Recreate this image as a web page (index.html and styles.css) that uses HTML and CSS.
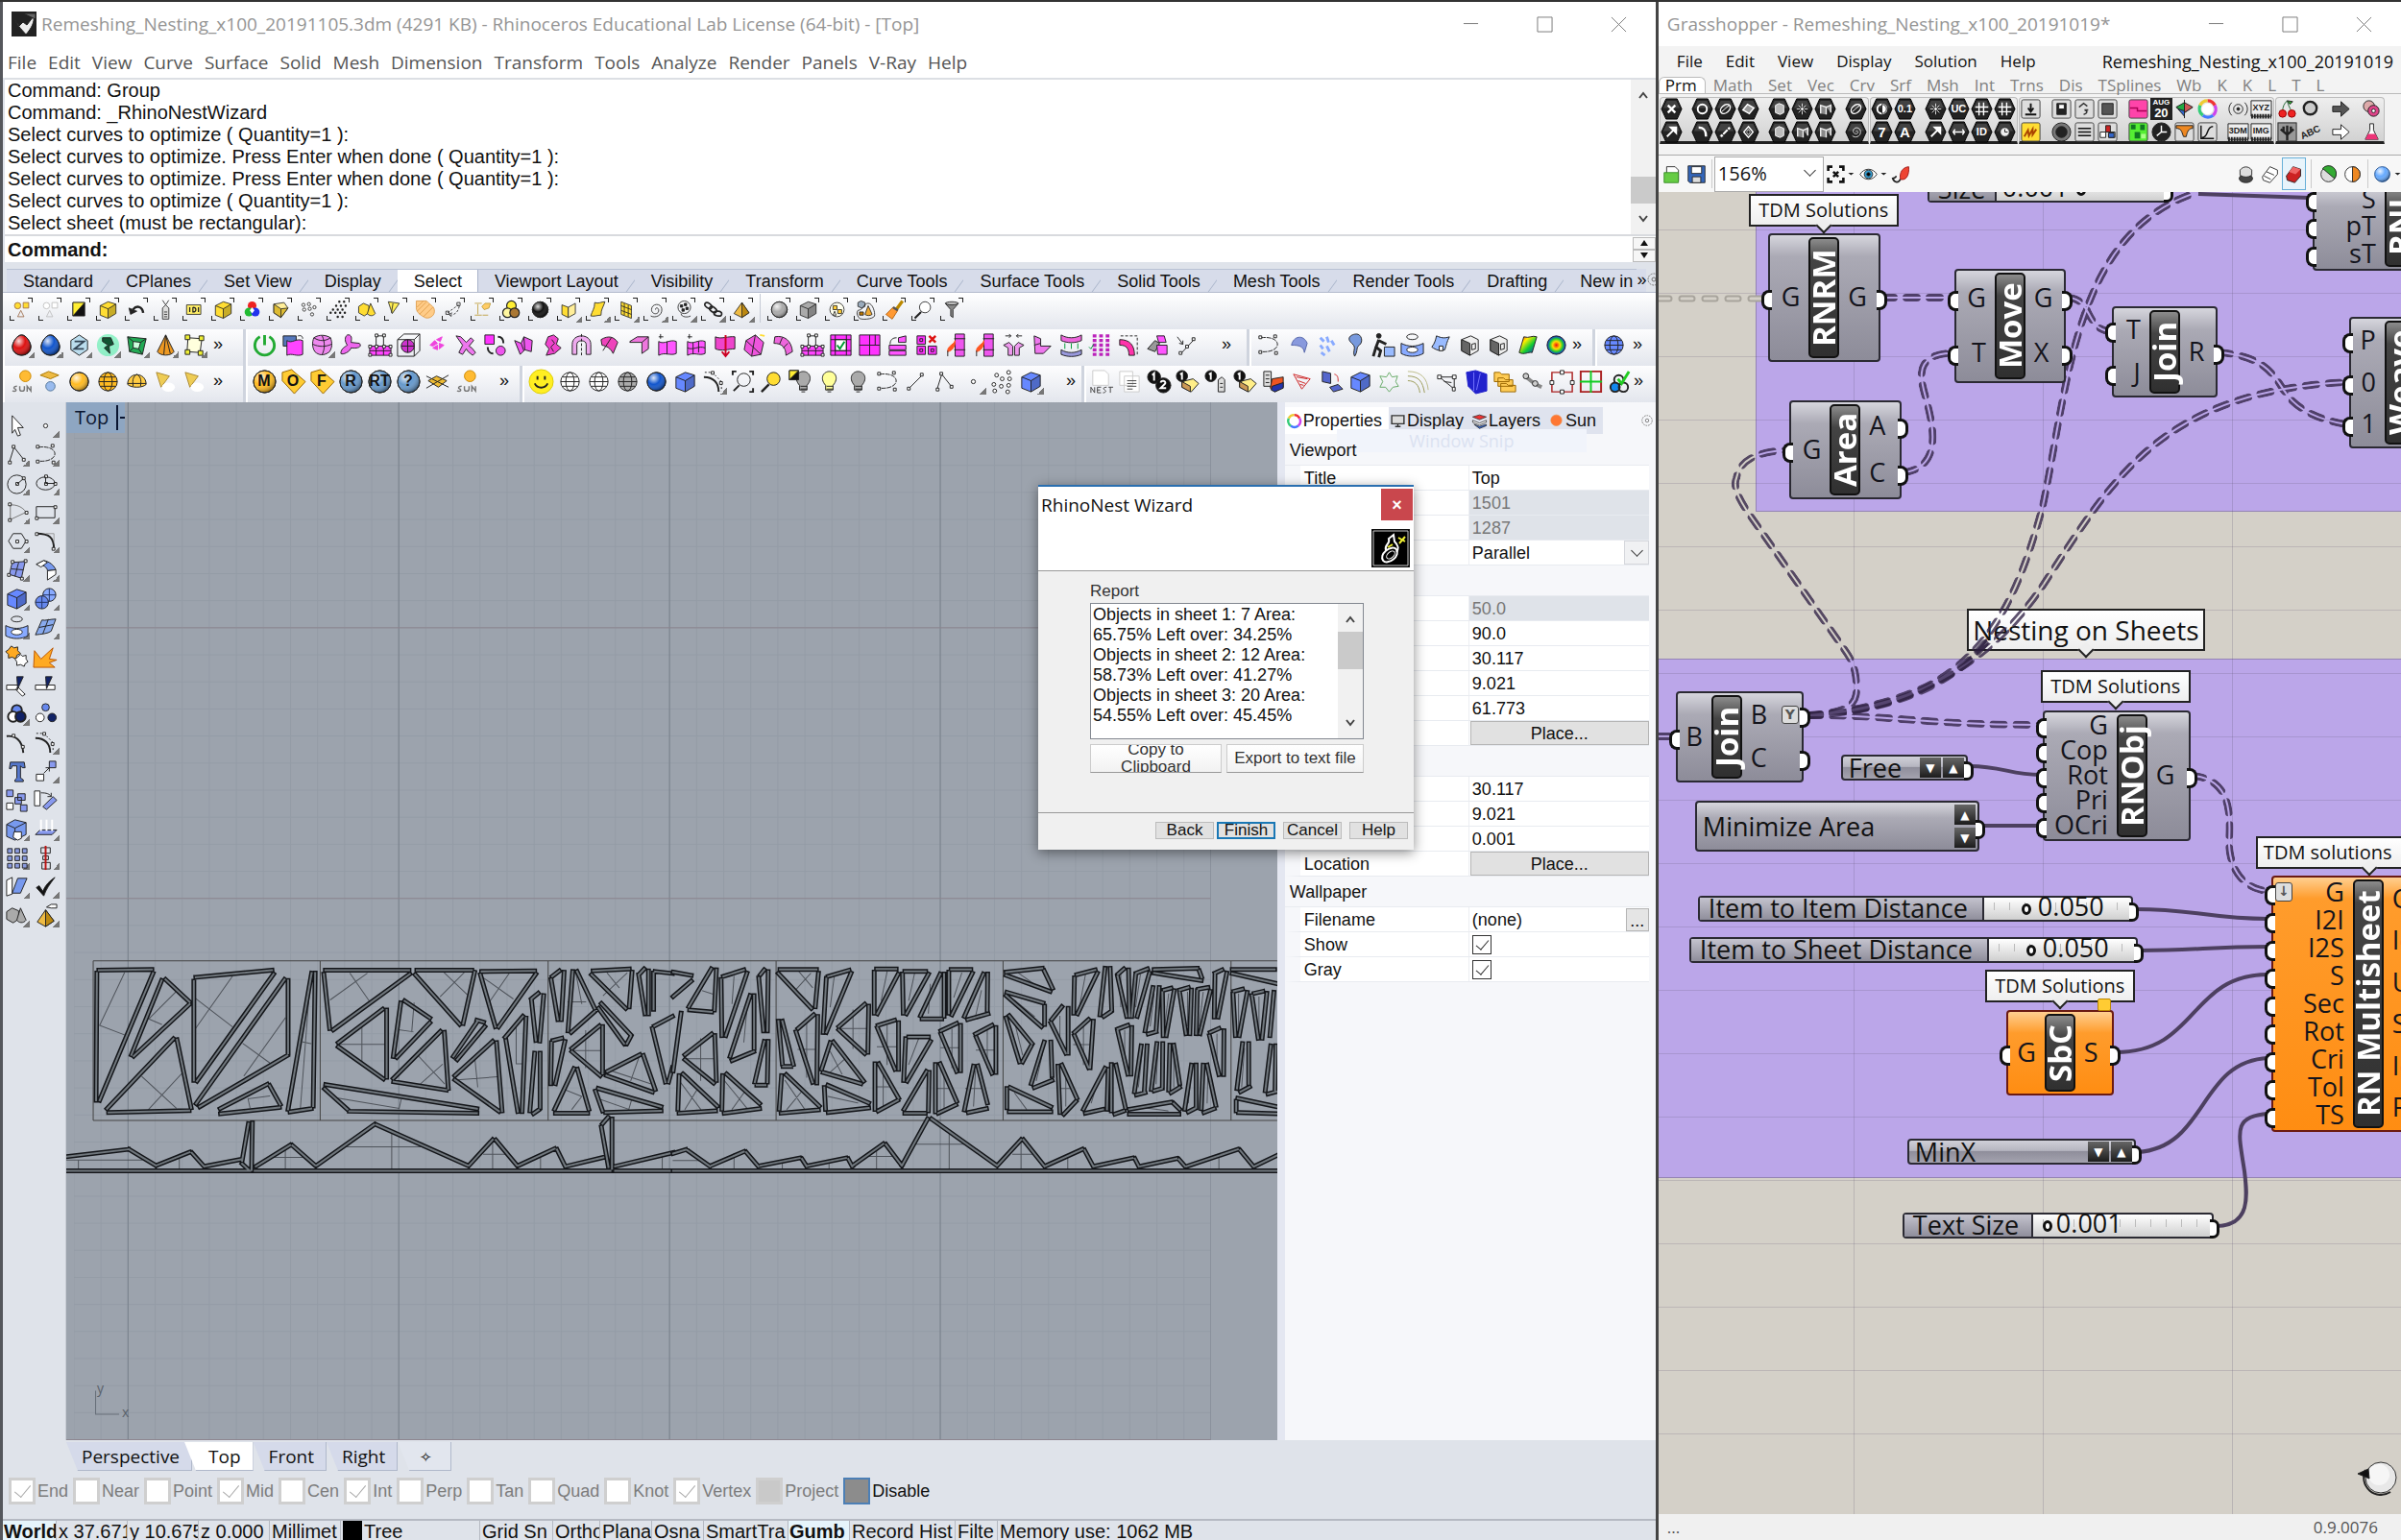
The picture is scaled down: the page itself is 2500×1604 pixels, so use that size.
FILE: index.html
```html
<!DOCTYPE html>
<html lang="en">
<head>
<meta charset="utf-8">
<title>Remeshing_Nesting_x100 - Rhinoceros and Grasshopper</title>
<link rel="stylesheet" href="styles.css">
</head>
<body>
<svg class="defs" aria-hidden="true">
<defs>
<linearGradient id="rain" x1="0" x2="1" y1="0" y2="1"><stop offset="0" stop-color="#e11"/><stop offset=".3" stop-color="#fe0"/><stop offset=".6" stop-color="#1c3"/><stop offset="1" stop-color="#12e"/></linearGradient>
<radialGradient id="shine" cx=".35" cy=".3" r=".7"><stop offset="0" stop-color="#fff" stop-opacity=".85"/><stop offset=".5" stop-color="#fff" stop-opacity="0"/><stop offset="1" stop-color="#000" stop-opacity=".4"/></radialGradient>
<radialGradient id="heat"><stop offset="0" stop-color="#e11"/><stop offset=".4" stop-color="#fd0"/><stop offset=".7" stop-color="#2c3"/><stop offset="1" stop-color="#12e"/></radialGradient>
</defs>
<symbol id="cube" viewBox="0 0 28 28"><path d="M4 9 14 4 24 7V19L14 25 4 21z" fill="currentColor"/><path d="M14 13 24 7V19L14 25z" fill="#000" fill-opacity=".22" stroke="none"/><path d="M4 9l10 4 10-6M14 13v12"/></symbol>
<symbol id="ball" viewBox="0 0 28 28"><circle cx="14" cy="14" r="10" fill="currentColor"/><circle cx="14" cy="14" r="10" fill="url(#shine)"/></symbol>
<symbol id="egg" viewBox="0 0 28 28"><path d="M14 3C19 3 24 11 24 16A10 9 0 0 1 4 16C4 11 9 3 14 3z" fill="currentColor"/><path d="M14 3C19 3 24 11 24 16A10 9 0 0 1 4 16C4 11 9 3 14 3z" fill="url(#shine)"/></symbol>
<symbol id="shapes" viewBox="0 0 28 28"><circle cx="9" cy="9" r="4" fill="currentColor"/><path d="M16 5h7v7h-7z" fill="currentColor"/><path d="M13 15l-4 8h8z"/></symbol>
<symbol id="invert" viewBox="0 0 28 28"><path d="M6 5h15v17H6z" fill="#111"/><path d="M6 22V5H21z" fill="#fe3"/></symbol>
<symbol id="undo" viewBox="0 0 28 28"><path d="M22 18C21 10 14 8 9 14" stroke-width="3"/><path d="M4 12l2 8 8-4z" fill="#222"/></symbol>
<symbol id="tag" viewBox="0 0 28 28"><path d="M10 12l4-4 4 4v14h-8z" fill="#ddd"/><path d="M12 17h4M12 20h4M12 23h4M14 8L10 2M14 8l4-6"/></symbol>
<symbol id="idc" viewBox="0 0 28 28"><path d="M4 8h18v12H4z" fill="#fe6"/><path d="M8 11v6M12 11v6c5 0 5-6 0-6M19 11v6" stroke-width="1.5"/></symbol>
<symbol id="rgb" viewBox="0 0 28 28"><g stroke="none"><circle cx="14" cy="9" r="5.500" fill="#e22"/><circle cx="10" cy="17" r="5.500" fill="#2b3"/><circle cx="18" cy="17" r="5.500" fill="#23e"/><path d="M14 11l3 4-3 4-3-4z" fill="#fff"/></g></symbol>
<symbol id="slab" viewBox="0 0 28 28"><path d="M5 7l13-2 5 7-9 12-9-6z" fill="#fe9"/><path d="M5 7l9 6 9-1-9 12-9-6z" fill="#db3"/><path d="M14 13v11"/></symbol>
<symbol id="pts" viewBox="0 0 28 28"><g fill="#fff"><circle cx="6" cy="8" r="2"/><circle cx="13" cy="7" r="2"/><circle cx="7" cy="14" r="2"/><circle cx="14" cy="13" r="2"/><circle cx="20" cy="11" r="2"/><circle cx="17" cy="20" r="2"/></g></symbol>
<symbol id="dots" viewBox="0 0 28 28"><path d="M15 4v0M21 4v0M11 9v0M17 9v0M23 9v0M7 14v0M13 14v0M19 14v0M4 18v0M10 18v0M16 18v0M22 18v0M13 23v0M19 23v0" stroke-width="3" stroke-linecap="round"/></symbol>
<symbol id="solids" viewBox="0 0 28 28"><path d="M3 10l6-4 7 3v9l-6 4-7-4z" fill="currentColor"/><path d="M18 6l6 13c-3 4-8 3-10 0z" fill="currentColor"/></symbol>
<symbol id="fan" viewBox="0 0 28 28"><path d="M4 4l14 2-9 13z" fill="#fe5"/><path d="M10 6l-2 12"/></symbol>
<symbol id="hatch" viewBox="0 0 28 28"><path d="M3 3h13c5 6 10 6 10 13s-8 10-12 8S3 18 3 12z" fill="#fc8" stroke="#d94"/><path d="M4 11l8-8M4 16L16 4M7 20L20 7M12 23L24 11" stroke="#d94"/></symbol>
<symbol id="span" viewBox="0 0 28 28"><path d="M6 18L20 8M9 21c6 0 11-4 12-12" stroke-dasharray="3 2"/><path d="M4 16h4v4H4zM18 5h4v4h-4zM8 20l4-2M8 20l3 3"/></symbol>
<symbol id="dims" viewBox="0 0 28 28"><path d="M4 6h9M4 21h9M8 7v13" stroke="#b93"/><path d="M13 10l4-4h7l-2 6-6 2z" fill="#fc6" stroke="#b93"/><path d="M14 21h7" stroke="#b93"/></symbol>
<symbol id="tri3" viewBox="0 0 28 28"><g stroke-width="1.500"><circle cx="14" cy="9" r="6" fill="#fe3"/><circle cx="9" cy="18" r="6" fill="#fff7a0"/><circle cx="18" cy="18" r="6" fill="currentColor"/></g></symbol>
<symbol id="open" viewBox="0 0 28 28"><path d="M5 8l8 3v13l-8-4z" fill="#fd3"/><path d="M13 11l9-5v13l-9 5z" fill="#fe9"/></symbol>
<symbol id="srf" viewBox="0 0 28 28"><path d="M10 5c5 2 8-1 13-1-2 7-5 9-5 17-5 0-8 2-13 1 2-7 5-9 5-17z" fill="currentColor"/></symbol>
<symbol id="mesh" viewBox="0 0 28 28"><path d="M7 4l13 5v16L7 20z" fill="currentColor"/><path d="M11 6v15M16 8v15M7 9l13 5M7 15l13 5"/></symbol>
<symbol id="spiral" viewBox="0 0 28 28"><path d="M14 14c0-4 5-2 4 2-1 5-9 4-9-2 0-8 12-9 13-1 1 9-9 12-14 9"/></symbol>
<symbol id="spots" viewBox="0 0 28 28"><circle cx="14" cy="11" r="8"/><path d="M9 8h3v3H9zM14 6h3v3h-3zM16 11h3v3h-3zM11 13h3v3h-3z" fill="#222"/><path d="M10 19c0 5 9 5 12 3"/></symbol>
<symbol id="chain" viewBox="0 0 28 28"><g stroke-width="2"><ellipse cx="8" cy="9" rx="5" ry="3" transform="rotate(35 8 9)"/><ellipse cx="14" cy="14" rx="5" ry="3" transform="rotate(35 14 14)"/><ellipse cx="20" cy="19" rx="5" ry="3" transform="rotate(10 20 19)"/></g></symbol>
<symbol id="pyr" viewBox="0 0 28 28"><path d="M14 5L4 19l10 5 9-6z" fill="#eb4"/><path d="M14 5v19l9-6z" fill="#b81"/></symbol>
<symbol id="ring" viewBox="0 0 28 28"><circle cx="14" cy="14" r="9" fill="#ffe"/><path d="M9 9h5v5H9zM15 14h5v5h-5z" fill="#fc3"/><path d="M11 16l-2 5h4z"/></symbol>
<symbol id="grp" viewBox="0 0 28 28"><path d="M8 3l5 2v5l-4 2-5-2V5z" fill="#9ab"/><path d="M4 15c8-1 7-9 13-9s9 12 8 16-18 6-20 2c-2-3-3-6-1-9z"/><path d="M17 9l5 11c-2 2-7 2-9 0z" fill="#ea3"/><path d="M6 17h5v4H6z" fill="#b70"/></symbol>
<symbol id="brush" viewBox="0 0 28 28"><path d="M24 3l-8 11" stroke="#b80" stroke-width="4"/><path d="M12 11l6 4-7 11-8-6z" fill="#f93" stroke="#a50"/><path d="M12 11l6 4" stroke="#555" stroke-width="3"/></symbol>
<symbol id="zoomi" viewBox="0 0 28 28"><circle cx="16" cy="11" r="7" fill="currentColor"/><path d="M11 17l-8 8" stroke-width="2.500"/></symbol>
<symbol id="funnel" viewBox="0 0 28 28"><path d="M5 6h17l-7 8v10l-3-2v-8z" fill="#888"/><ellipse cx="13.500" cy="6" rx="8" ry="2" fill="#bbb"/></symbol>
<symbol id="hexz" viewBox="0 0 28 28"><path d="M14 3l9 6v10l-9 6-9-6V9z" fill="#bde"/><path d="M9 10h10L9 18h10" stroke="#345" stroke-width="2"/></symbol>
<symbol id="glow" viewBox="0 0 28 28"><circle cx="14" cy="14" r="12" fill="#3e9" fill-opacity=".5" stroke="none"/><path d="M8 6h9l3 7-5 2 1 8-6-6 4-3-6-4z" fill="#153"/></symbol>
<symbol id="gbox" viewBox="0 0 28 28"><path d="M4 5l20 2-4 17-14-3z" fill="#2a5"/><path d="M10 10l8 1-2 7-6-1z" fill="#cfd"/><path d="M4 5l6 5M24 7l-6 4M20 24l-4-6M6 21l4-4"/></symbol>
<symbol id="cone" viewBox="0 0 28 28"><path d="M14 3l9 18c-3 5-15 5-18 0z" fill="#e92"/><path d="M14 3l-2 21M14 3l5 20"/></symbol>
<symbol id="cage" viewBox="0 0 28 28"><path d="M7 6l15 1-2 15-14-1z" fill="#ffd"/><g fill="#ee3"><path d="M4 3h5v5H4zM19 4h5v5h-5zM18 20h5v5h-5zM4 19h5v5H4z"/></g></symbol>
<symbol id="power" viewBox="0 0 28 28"><path d="M9 5a10.500 10.500 0 1 0 10 0M14 3v11" stroke="#2a3" stroke-width="3"/></symbol>
<symbol id="m1" viewBox="0 0 28 28"><path d="M3 4h14v11H3z" fill="#57b"/><path d="M7 9c5 4 10-3 17 0v15c-6 3-12-2-17 1z" fill="#f4f"/><path d="M19 4c4-1 5 1 5 3"/></symbol>
<symbol id="m2" viewBox="0 0 28 28"><path d="M5 6c6-4 13-3 18 0 2 6 2 10-1 15-6 5-12 4-16 0-3-5-3-10-1-15z" fill="#e8e"/><path d="M14 4c3 7 3 14 0 20M4 13c6 3 14 3 20 0M5 6c6 4 12 4 18 0"/></symbol>
<symbol id="m3" viewBox="0 0 28 28"><path d="M10 3c5-1 5 4 4 8l9 1c3 3 0 6-9 5-1 4-9 8-11 6 0-5 4-7 7-9-3-4-3-9 0-11z" fill="#e6e"/></symbol>
<symbol id="m4" viewBox="0 0 28 28"><path d="M3 15h23v10H3z" fill="#f4f"/><path d="M10 15V4h8v11M10 15v10M18 15v10M3 20h23"/><path d="M2 14h3v3H2zM9 14h3v3H9zM17 14h3v3h-3zM24 14h3v3h-3zM2 23h3v3H2zM24 23h3v3h-3zM9 2h3v3H9zM17 2h3v3h-3z" fill="#fff"/></symbol>
<symbol id="m5" viewBox="0 0 28 28"><path d="M2 8h18v18H2zM2 8l7-6h17v18l-6 6M20 8l6-6"/><circle cx="13" cy="15" r="7" fill="#c3c"/><path d="M13 8v14M6 15h14"/></symbol>
<symbol id="m6" viewBox="0 0 28 28"><path d="M6 14l5-5 3 3-5 3zM13 8l6-3-2 5zM9 17l5-3v5zM16 12l5 2-5 4z" fill="#e4d" stroke="#e4d"/></symbol>
<symbol id="m7" viewBox="0 0 28 28"><path d="M3 4l5 1 6 6 5-5 3 3-5 6 3 2 4 5-3 3-5-4-2-3-4 6-4-2 4-8z" fill="#e7e"/></symbol>
<symbol id="m8" viewBox="0 0 28 28"><path d="M3 3h10v10H3z" fill="#f3f"/><circle cx="20" cy="20" r="5" fill="#e5e"/><path d="M17 5c5 0 6 3 6 7M6 16c0 5 3 7 6 7" stroke-width="2"/></symbol>
<symbol id="m9" viewBox="0 0 28 28"><path d="M4 9l7 3 3-7 9 4-1 12-7-2-5 5z" fill="#e5e"/><path d="M14 5l1 14M11 12l3 8"/></symbol>
<symbol id="m10" viewBox="0 0 28 28"><path d="M9 5l6-2 5 4-2 6 5 4-7 6-9 2 3-7-4-5z" fill="#e4c"/><path d="M13 8l3 4-4 4 3 5"/></symbol>
<symbol id="m11" viewBox="0 0 28 28"><path d="M4 24V13C4 1 24 1 24 13v11h-5V13c0-5-10-5-10 0v11z" fill="#eae"/><path d="M14 2v24" stroke-dasharray="3 2"/></symbol>
<symbol id="m12" viewBox="0 0 28 28"><path d="M4 8c8-5 14-3 18 3l-5 12c-3-6-7-8-12-9z" fill="#e4b"/><path d="M6 20l9-14"/></symbol>
<symbol id="m13" viewBox="0 0 28 28"><path d="M4 10l8-5h12v13l-7 5V11H4z" fill="#e7d"/><path d="M17 11l7-6"/></symbol>
<symbol id="m14" viewBox="0 0 28 28"><path d="M4 10c6 4 12-3 19 0v13c-6 3-12-2-19 2z" fill="#f5f"/><path d="M13 10v14M6 2v5M4 5h5"/></symbol>
<symbol id="m15" viewBox="0 0 28 28"><path d="M4 10c6 4 12-3 19 0v13c-6 3-12-2-19 2z" fill="#f5f"/><path d="M10 11v13M16 10v12M4 17c6 3 12-3 19 0M6 2v5M4 5h5"/></symbol>
<symbol id="m16" viewBox="0 0 28 28"><path d="M3 5c6 3 14-1 21 0v13c-7 0-14 3-21 0z" fill="#e4c"/><path d="M14 3v23M10 21l4 5 4-5" stroke="#c02" stroke-width="2"/></symbol>
<symbol id="m17" viewBox="0 0 28 28"><path d="M5 9l10-6 9 8-3 13-10 2-8-7z" fill="#e5d"/><path d="M15 3L11 26M5 9l16 15" /><path d="M20 3l5 1" stroke="#fd3" stroke-width="2"/></symbol>
<symbol id="m18" viewBox="0 0 28 28"><path d="M5 5c10-2 18 4 19 16l-7 4C17 16 12 12 4 12z" fill="#e6d"/><path d="M13 6l-3 7M19 12l-5 5"/></symbol>
<symbol id="m19" viewBox="0 0 28 28"><path d="M3 3h22v22H3z" fill="#f3f"/><path d="M8 8h12v12H8z" fill="#fff"/><path d="M8 3v22M20 3v22M3 8h22M3 20h22"/><path d="M10 14l3 4 5-8" stroke="#093" stroke-width="2"/></symbol>
<symbol id="m20" viewBox="0 0 28 28"><path d="M3 3h22v22H3z" fill="#f3f"/><path d="M14 3v22M3 14h22M20 3v11" /></symbol>
<symbol id="m21" viewBox="0 0 28 28"><path d="M4 14h18v5H4zM4 20h18v5H4zM14 6l8-2v7h-8z" fill="#f5f"/><path d="M5 13c0-5 3-7 7-7"/></symbol>
<symbol id="m22" viewBox="0 0 28 28"><path d="M3 4h9v9H3zM3 15h9v9H3zM15 15h9v9h-9z" fill="#f3f"/><path d="M6 7h3v3H6zM6 18h3v3H6zM18 18h3v3h-3z"/><path d="M16 4l7 7M23 4l-7 7" stroke="#d11" stroke-width="2.500"/></symbol>
<symbol id="m23" viewBox="0 0 28 28"><path d="M13 2h10v24H13z" fill="#e5e"/><path d="M12 7h12M12 19h12"/><path d="M13 9c-2 5-9 6-8 12 5-1 8-5 8-12z" fill="#f52" stroke="#f52"/><path d="M5 20v6"/></symbol>
<symbol id="m24" viewBox="0 0 28 28"><path d="M3 14l6-3 4 4v10H8V17zM25 14l-6-3-4 4v10h5V17z" fill="#e9e"/><path d="M5 4h6M9 2l2 2-2 2M23 4h-6M19 2l-2 2 2 2"/></symbol>
<symbol id="m25" viewBox="0 0 28 28"><path d="M5 4l7 3v8h11l-8 8H6z" fill="#e7e"/><path d="M5 14l7-2"/></symbol>
<symbol id="m26" viewBox="0 0 28 28"><path d="M3 3c7 4 15 4 22 0v6c-7 3-15 3-22 0z" fill="#e6d"/><path d="M3 19c7 4 15 4 22 0v5c-7 3-15 3-22 0z" fill="#99d"/><path d="M7 12v6M14 12v6M21 12v6" stroke="#093"/></symbol>
<symbol id="m27" viewBox="0 0 28 28"><path d="M6 4h18M6 9h18M6 14h18M6 19h18M6 24h18" stroke="#b2b" stroke-width="3.500" stroke-dasharray="4 3"/><path d="M2 16l2 2 3-5" stroke="#093"/></symbol>
<symbol id="m28" viewBox="0 0 28 28"><path d="M4 8c11 0 16 6 16 17h-6c0-8-3-11-10-11z" fill="#f3a"/><path d="M5 4h18v20" stroke-dasharray="3 2"/></symbol>
<symbol id="m29" viewBox="0 0 28 28"><path d="M3 18l8-9 5 3-5 9z" fill="#999"/><path d="M13 4h8l2 7h-8zM13 14h11v10H14z" fill="#f5f"/></symbol>
<symbol id="m30" viewBox="0 0 28 28"><path d="M4 5l6 8M10 13l-4-1M10 13V9M8 23L22 8"/><path d="M6 21h3v3H6zM13 14h3v3h-3zM20 6h3v3h-3z" fill="#fff"/></symbol>
<symbol id="arc" viewBox="0 0 28 28"><path d="M6 6c24-3 24 17 0 15" stroke-dasharray="5 1"/><path d="M4 4h3v3H4zM4 20h3v3H4zM20 3h3v3h-3zM21 21h3v3h-3z" fill="#fff"/></symbol>
<symbol id="b2" viewBox="0 0 28 28"><path d="M8 14c2-10 13-12 17-2l-3 10c-1-7-6-8-14-8z" fill="#89d" stroke="#56a"/></symbol>
<symbol id="b3" viewBox="0 0 28 28"><path d="M8 6l4 4M15 5l2 6M8 14l3 4M15 15l3 6M20 9l3 5M9 22l4 3" stroke="#8af" stroke-width="3"/></symbol>
<symbol id="b4" viewBox="0 0 28 28"><path d="M14 26c-3-6 3-9-3-14-7-6 0-10 5-10s8 8 3 12c-4 3-1 6-5 12z" fill="#79d"/></symbol>
<symbol id="b5" viewBox="0 0 28 28"><circle cx="9" cy="4" r="2.500" fill="#222"/><path d="M9 8l-3 8 5 4-2 7M6 16l-3 10M9 9l8 4" stroke-width="3"/><path d="M15 16h11v10H15z" fill="#9bf"/></symbol>
<symbol id="b6" viewBox="0 0 28 28"><ellipse cx="14" cy="5" rx="6" ry="3"/><path d="M2 12c8 4 16 4 24 0v11c-7 4-17 4-24 0z" fill="#8af"/><ellipse cx="14" cy="19" rx="6" ry="3" fill="#fff"/></symbol>
<symbol id="b7" viewBox="0 0 28 28"><path d="M9 4c5 2 8 3 14 1-3 6-3 8-5 14-5 2-10 0-14-3 3-4 4-7 5-12z" fill="#9bf"/><path d="M12 15h4v5h-4z" fill="#fff"/></symbol>
<symbol id="lcube" viewBox="0 0 28 28"><path d="M5 8l10-4 8 4v12l-9 5-9-5z" fill="#eee"/><path d="M5 8l9 4v13l-9-5z" fill="#666"/><path d="M16 13l4-1v6l-4 1z"/></symbol>
<symbol id="rainb" viewBox="0 0 28 28"><path d="M10 5c6 2 9-2 14 0l-5 17c-5-1-8 3-14 0z" fill="url(#rain)"/></symbol>
<symbol id="heatb" viewBox="0 0 28 28"><circle cx="14" cy="14" r="10" fill="url(#heat)"/></symbol>
<symbol id="globe" viewBox="0 0 28 28"><circle cx="14" cy="14" r="10" fill="currentColor"/><ellipse cx="14" cy="14" rx="4.500" ry="10"/><path d="M4 14h20M6 9h16M6 19h16"/></symbol>
<symbol id="sun" viewBox="0 0 28 28"><circle cx="18" cy="8" r="6" fill="#fb3" stroke="#c80"/><path d="M9 19c-4 0-4 2-2 3s1 3-3 2M12 19v3c0 3 5 3 5 0v-3M20 25v-6l4 5v-5" stroke="#777" stroke-width="1.500"/></symbol>
<symbol id="plane" viewBox="0 0 28 28"><path d="M3 7l9-4 11 4-9 4z" fill="#eb4" stroke="#a70"/><circle cx="14" cy="19" r="5" fill="#9be" stroke="#579"/></symbol>
<symbol id="dome" viewBox="0 0 28 28"><path d="M4 17C4 3 24 3 24 17c-4 4-16 4-20 0z" fill="#fc4"/><path d="M10 19c-1-8 0-10 4-13 4 3 5 5 4 13M4 16h20"/></symbol>
<symbol id="spot" viewBox="0 0 28 28"><path d="M4 4l14 4-9 12z" fill="#ec5" stroke="#a83"/><ellipse cx="17" cy="20" rx="7" ry="5" fill="#fff" stroke="none"/></symbol>
<symbol id="vm" viewBox="0 0 28 28"><circle cx="14" cy="14" r="12" fill="currentColor"/><circle cx="14" cy="14" r="12" fill="url(#shine)"/></symbol>
<symbol id="vt" viewBox="0 0 28 28"><path d="M2 4l10-3 15 13-12 13L2 13z" fill="#fc3" stroke="#960"/></symbol>
<symbol id="vmesh" viewBox="0 0 28 28"><path d="M4 13l9-5 11 5-9 7z" fill="#eb3"/><path d="M2 8l24 12M2 21L26 7"/></symbol>
<symbol id="smile" viewBox="0 0 28 28"><circle cx="14" cy="14" r="13" fill="#fe2" stroke="#dc0"/><path d="M10 8v4M18 8v4M7 16c3 6 11 6 14 0" stroke-width="2"/></symbol>
<symbol id="crv" viewBox="0 0 28 28"><path d="M3 9c10 0 16 6 16 16" stroke-width="2"/><path d="M4 4h8l10 10v10" stroke-dasharray="2 2"/><path d="M11 3h3v3h-3zM20 14h3v3h-3z" fill="#fff"/></symbol>
<symbol id="ext" viewBox="0 0 28 28"><circle cx="15" cy="12" r="7"/><path d="M10 18l-6 6" stroke-width="2"/><path d="M3 7V3h4M21 3h4v4M25 21v4h-4" stroke-width="2"/></symbol>
<symbol id="bulb" viewBox="0 0 28 28"><path d="M10 18C3 10 8 3 14 3s11 7 4 15v5h-8z" fill="currentColor"/><path d="M11 19h7M11 22h7M12 25h4"/></symbol>
<symbol id="bulbx" viewBox="0 0 28 28"><use href="#bulb" x="3"/><path d="M2 2h10v10H2z" fill="#111"/><path d="M2 12V2h10z" fill="#fe3"/></symbol>
<symbol id="line" viewBox="0 0 28 28"><path d="M7 21L21 7"/><path d="M5 20h3v3H5zM19 5h3v3h-3z" fill="#fff"/></symbol>
<symbol id="pline" viewBox="0 0 28 28"><path d="M6 22l5-16 11 14"/><path d="M5 21h3v3H5zM9 4h3v3H9zM20 18h3v3h-3z" fill="#fff"/></symbol>
<symbol id="pt" viewBox="0 0 28 28"><circle cx="14" cy="14" r="2.200" fill="#fff"/></symbol>
<symbol id="cloud" viewBox="0 0 28 28"><g fill="#fff"><circle cx="8" cy="7" r="2"/><circle cx="21" cy="4" r="2"/><circle cx="14" cy="11" r="2"/><circle cx="22" cy="11" r="2"/><circle cx="5" cy="17" r="2"/><circle cx="13" cy="19" r="2"/><circle cx="21" cy="18" r="2"/><circle cx="6" cy="24" r="2"/><circle cx="20" cy="25" r="2"/></g></symbol>
<symbol id="nest" viewBox="0 0 28 28"><path d="M5 2h13l4 4v12H5z" fill="#fff" stroke="#ccc"/><path d="M3 26v-6l4 6v-6M14 20h-4v6h4M10 23h3M20 20c-4 0-4 2-2 3s1 3-2 3M22 20h5M24 20v6" stroke="#444"/></symbol>
<symbol id="docs" viewBox="0 0 28 28"><path d="M3 3h14v15H3zM8 8h16v17H8z" fill="#fff" stroke="#ccc"/><path d="M11 13h10M11 16h10M11 19h10M11 22h6" stroke="#444"/></symbol>
<symbol id="n12" viewBox="0 0 28 28"><circle cx="9" cy="9" r="7" fill="#111"/><circle cx="19" cy="18" r="8" fill="#111"/><path d="M7 7l2-2v8M16 15c1-3 6-2 5 1l-5 5h6" stroke="#fff" stroke-width="2"/></symbol>
<symbol id="n1s" viewBox="0 0 28 28"><path d="M8 14l12-3 6 5-8 9-10-5z" fill="#fe8"/><path d="M8 14l9 5v6l-9-5z" fill="#c95"/><circle cx="8" cy="8" r="6" fill="#111"/><path d="M6 6l2-1v7" stroke="#fff" stroke-width="2"/></symbol>
<symbol id="n1t" viewBox="0 0 28 28"><path d="M16 12l4-3 3 3v13h-7z" fill="#ddd"/><circle cx="8" cy="8" r="6" fill="#111"/><path d="M6 6l2-1v7" stroke="#fff" stroke-width="2"/><path d="M18 16h3M18 20h3"/></symbol>
<symbol id="rb" viewBox="0 0 28 28"><path d="M3 3h8v16H3z" fill="#ddd"/><path d="M5 7h4M5 11h4M5 15h4"/><path d="M12 11l12-2v11l-9 5-5-4z" fill="#e52"/><path d="M12 19l12-4v6l-9 4-4-2z" fill="#23a"/></symbol>
<symbol id="rv" viewBox="0 0 28 28"><path d="M4 6l18 5-9 11zM7 9l12 2M9 13l8 3M11 17l4 1" stroke="#c22"/></symbol>
<symbol id="bs" viewBox="0 0 28 28"><path d="M4 3l9 2v11l-9-2zM12 20l9-3 5 5-10 3z" fill="#56c"/><path d="M17 6c4 1 4 4 4 8" stroke="#c22"/></symbol>
<symbol id="star" viewBox="0 0 28 28"><path d="M14 4l3 5 6-1-2 6 3 5-6 1-4 5-4-5-6 0 3-6-3-6 7 1z" stroke="#6a6"/></symbol>
<symbol id="arcs" viewBox="0 0 28 28"><path d="M3 8c12 0 16 6 18 18M3 13c8 0 12 5 13 13" stroke="#995"/><path d="M3 3c15 0 21 8 22 20" stroke="#bb8"/></symbol>
<symbol id="tr" viewBox="0 0 28 28"><path d="M6 9h16v13zM11 14l8 1"/><path d="M4 7h4v4H4zM20 7h4v4h-4zM20 20h3v4h-3z" fill="#fff"/></symbol>
<symbol id="bl" viewBox="0 0 28 28"><path d="M4 4l10-2 12 4v18l-12 3-8-8z" fill="#22c" stroke="#22c"/><path d="M12 4v20M19 5l-4 18" stroke="#77f"/></symbol>
<symbol id="fold" viewBox="0 0 28 28"><path d="M3 4h6l2 2h8v8H3zM7 10h6l2 2h8v7H7zM10 16h6l2 2h8v7H10z" fill="#fc5" stroke="#960"/></symbol>
<symbol id="arm" viewBox="0 0 28 28"><path d="M5 8l10 8 8 4" stroke="#888" stroke-width="4"/><circle cx="6" cy="8" r="3" fill="#ccc"/><circle cx="16" cy="16" r="3" fill="#ccc"/></symbol>
<symbol id="rsq" viewBox="0 0 28 28"><path d="M3 4h22v21H3z" stroke="#a22" stroke-width="1.500"/><path d="M12 2h4v4h-4zM12 23h4v4h-4zM1 13h4v4H1zM23 13h4v4h-4z" fill="#fff"/></symbol>
<symbol id="gsq" viewBox="0 0 28 28"><path d="M3 3h22v22H3z" stroke="#a22" stroke-width="2"/><path d="M14 2v24M2 14h24" stroke="#1c2" stroke-width="2"/></symbol>
<symbol id="ckc" viewBox="0 0 28 28"><circle cx="13" cy="12" r="5" stroke-width="2"/><circle cx="9" cy="20" r="5" fill="#18e" stroke-width="2"/><circle cx="18" cy="20" r="5" stroke-width="2"/><path d="M12 11l4 5 8-13" stroke="#2c2" stroke-width="3"/></symbol>
<symbol id="arrow" viewBox="0 0 28 28"><path d="M9 3l12 13h-6l3 8-3 1-3-7-3 4z" fill="#fff"/></symbol>
<symbol id="circ" viewBox="0 0 28 28"><circle cx="14" cy="15" r="10"/><path d="M14 15l7-6M13 13h3v3h-3zM20 7h3v3h-3z" fill="#fff"/></symbol>
<symbol id="elli" viewBox="0 0 28 28"><ellipse cx="14" cy="14" rx="10" ry="7"/><path d="M14 14h10M14 14V7M13 13h3v3h-3zM13 5h3v3h-3zM23 13h3v3h-3z" fill="#fff"/></symbol>
<symbol id="pie" viewBox="0 0 28 28"><path d="M7 6v16L24 14C20 8 14 6 7 6" stroke="#777"/><path d="M5 4h3v3H5zM5 21h3v3H5zM23 13h3v3h-3z" fill="#fff"/></symbol>
<symbol id="rect" viewBox="0 0 28 28"><path d="M4 8h20v12H4z"/><path d="M3 19h3v3H3zM23 7h3v3h-3z" fill="#fff"/></symbol>
<symbol id="poly" viewBox="0 0 28 28"><path d="M5 14l5-8h9l5 8-5 8h-9z"/><path d="M13 13h3v3h-3zM23 13h3v3h-3z" fill="#fff"/></symbol>
<symbol id="fil" viewBox="0 0 28 28"><path d="M4 6c14 0 19 4 19 17" stroke-width="2"/><path d="M14 6h9v9" stroke="#999"/><path d="M3 5h3v3H3zM21 21h3v3h-3z" fill="#fff"/></symbol>
<symbol id="blend" viewBox="0 0 28 28"><path d="M3 7c9-1 17 4 18 18" stroke-width="2"/><path d="M9 5h3v3H9zM19 17h3v3h-3z" fill="#fff"/></symbol>
<symbol id="sp" viewBox="0 0 28 28"><path d="M9 6l14-1-4 18-13-4z" fill="#89e"/><path d="M16 6l-4 15M8 13l13 1"/><path d="M8 4h3v3H8zM22 3h3v3h-3zM18 22h3v3h-3zM4 18h3v3H4z" fill="#fff"/></symbol>
<symbol id="fs" viewBox="0 0 28 28"><path d="M4 8l8-4c6 1 11 5 13 10l-9 1c0-3-4-7-12-7z" fill="#79e"/><path d="M4 8l8-4 4 2-7 5zM16 15l9-1v5l-9 6z" fill="#fff"/></symbol>
<symbol id="sph2" viewBox="0 0 28 28"><circle cx="18" cy="10" r="7" fill="#8af"/><circle cx="10" cy="18" r="7" fill="#68e"/><path d="M3 18h14M10 11v14M18 3v14M11 10h14" stroke="#236"/></symbol>
<symbol id="surf2" viewBox="0 0 28 28"><path d="M10 6c4 1 9-1 15-1l-5 13c-4 3-10 3-17 4z" fill="#8ae"/><path d="M17 5L11 21M7 14l15-3"/></symbol>
<symbol id="gear2" viewBox="0 0 28 28"><path d="M8 3l3 2 4-1v4l3 3-4 2-1 4-4-2-4 1 0-4-3-3 3-2z" fill="#fa2"/><path d="M18 12l2 2 4-1v4l2 3-3 2-1 3-4-2-4 1v-4l-2-3 3-2z" fill="#fff"/></symbol>
<symbol id="boom" viewBox="0 0 28 28"><path d="M1 26L2 8l7 9L22 5l-4 12 8 1-8 3 6 5z" fill="#fa2" stroke="#b50"/></symbol>
<symbol id="trim" viewBox="0 0 28 28"><path d="M3 14h12v5H3zM15 16l8 8-3 2-7-7z" fill="#fff"/><path d="M14 5h7l-6 13z" fill="#126"/></symbol>
<symbol id="split" viewBox="0 0 28 28"><path d="M3 14h21v5H3z" fill="#fff"/><path d="M14 5h7l-6 13z" fill="#126"/></symbol>
<symbol id="bool" viewBox="0 0 28 28"><g stroke-width="2"><circle cx="14" cy="10" r="5.500" fill="#68e"/><circle cx="10" cy="17" r="5.500" fill="#fff"/><circle cx="18" cy="17" r="5.500" fill="#126"/></g></symbol>
<symbol id="bool2" viewBox="0 0 28 28"><circle cx="14" cy="7" r="4" fill="#68e"/><circle cx="8" cy="18" r="4.500" fill="#fff"/><circle cx="21" cy="18" r="4.500" fill="#126"/></symbol>
<symbol id="tt" viewBox="0 0 28 28"><path d="M7 4h15l1 6h-3l-2-2v13l3 2v2h-9v-2l2-2V8H9l-1 3H6z" fill="#57c"/></symbol>
<symbol id="mv" viewBox="0 0 28 28"><path d="M4 17h8v7H4z" fill="#fff"/><path d="M18 3h7v7h-7z" fill="#89e"/><path d="M12 16l6-6M14 10h4v4"/></symbol>
<symbol id="cp" viewBox="0 0 28 28"><path d="M3 3h7v7H3zM15 7h8v7h-8zM12 11h7v7h-7zM18 19h7v7h-7z" fill="#89e"/><path d="M3 17h7v7H3z" fill="#fff"/></symbol>
<symbol id="rot" viewBox="0 0 28 28"><path d="M2 4h6v16H2z" fill="#fff"/><path d="M22 10l4 4-11 10-4-3z" fill="#89e"/><path d="M9 6c6 0 9 1 11 4M20 6v4h-4"/></symbol>
<symbol id="cbox" viewBox="0 0 28 28"><path d="M3 9l9-5 12 3v13l-12 6-9-4z" fill="#79e"/><path d="M3 9l9 4 12-6M12 13v4"/><path d="M11 17h8v7l-4 2-5-3z" fill="#fff"/></symbol>
<symbol id="ups" viewBox="0 0 28 28"><path d="M3 20l5-5h18l-5 5z" fill="#89e"/><path d="M9 16V4M15 16V4M21 16V4" stroke="#fff" stroke-width="2"/></symbol>
<symbol id="arr" viewBox="0 0 28 28"><g fill="#89d"><path d="M4 4h5v5H4zM12 4h5v5h-5zM20 4h5v5h-5zM4 12h5v5H4zM12 12h5v5h-5zM20 12h5v5h-5zM4 20h5v5H4zM12 20h5v5h-5zM20 20h5v5h-5z"/></g></symbol>
<symbol id="aln" viewBox="0 0 28 28"><path d="M9 3h10v6H9zM11 12h6v4h-6zM10 19h9v7h-9z"/><path d="M14 1v26" stroke="#b11" stroke-width="2"/></symbol>
<symbol id="bks" viewBox="0 0 28 28"><path d="M3 7l6-3v18l-6 2z" fill="#fff"/><path d="M15 5h10l-7 16h-9z" fill="#79e"/></symbol>
<symbol id="chk" viewBox="0 0 28 28"><path d="M4 15l3-2 4 6C14 12 18 8 24 4c-6 8-9 12-12 20z" fill="#111"/></symbol>
<symbol id="hand" viewBox="0 0 28 28"><path d="M14 8L5 21l9 5 9-6z" fill="#eb4"/><path d="M14 8v18l9-6z" fill="#b81"/><path d="M15 5l5-3h6v4h-6z" fill="#fff"/></symbol>
<symbol id="hex" viewBox="0 0 24 24"><path d="M6 1h12l5 11-5 11H6L1 12z" fill="#222" stroke="#000"/><path d="M7 3h10l4 8H3z" fill="#fff" fill-opacity=".15" stroke="none"/></symbol>
<symbol id="h1" viewBox="0 0 24 24"><use href="#hex"/><path d="M8 8l8 8M16 8l-8 8" stroke="#fff" stroke-width="2.500"/></symbol>
<symbol id="h2" viewBox="0 0 24 24"><use href="#hex"/><path d="M7 17l8-8M11 7h6v6z" stroke="#fff" stroke-width="2" fill="#fff"/></symbol>
<symbol id="h3" viewBox="0 0 24 24"><use href="#hex"/><circle cx="12" cy="12" r="5" stroke="#fff" stroke-width="2"/></symbol>
<symbol id="h4" viewBox="0 0 24 24"><use href="#hex"/><path d="M8 7c6 0 8 3 8 10" stroke="#fff" stroke-width="2.500"/></symbol>
<symbol id="h5" viewBox="0 0 24 24"><use href="#hex"/><ellipse cx="12" cy="12" rx="6" ry="4" stroke="#fff" stroke-width="1.500" transform="rotate(-40 12 12)"/><path d="M8 15l8-7" stroke="#fff"/></symbol>
<symbol id="h6" viewBox="0 0 24 24"><use href="#hex"/><path d="M7 17L17 7" stroke="#fff" stroke-width="2"/><circle cx="8" cy="16" r="2" fill="#fff"/><circle cx="16" cy="8" r="2" fill="#fff"/></symbol>
<symbol id="h7" viewBox="0 0 24 24"><use href="#hex"/><path d="M6 13l5-6 7 4-5 6z" stroke="#fff" stroke-width="1.500" fill="#999"/></symbol>
<symbol id="h8" viewBox="0 0 24 24"><use href="#hex"/><path d="M12 6l5 6-5 6-5-6z" stroke="#fff" stroke-width="1.500"/><path d="M12 9l2 3-2 3-2-3z" stroke="#ccc"/></symbol>
<symbol id="h9" viewBox="0 0 24 24"><use href="#hex"/><path d="M8 8l4-2 5 2v8l-4 2-5-2z" fill="#bbb" stroke="#fff"/></symbol>
<symbol id="h10" viewBox="0 0 24 24"><use href="#hex"/><path d="M12 6v12M6 12h12M8 8l8 8M16 8l-8 8" stroke="#ddd"/><circle cx="12" cy="12" r="2" fill="#fff"/></symbol>
<symbol id="h11" viewBox="0 0 24 24"><use href="#hex"/><path d="M7 17V8l6 2v8M13 10l5-2v8" stroke="#eee" stroke-width="1.500" fill="#888"/></symbol>
<symbol id="h12" viewBox="0 0 24 24"><use href="#hex"/><path d="M12 12c0-2 3-1 2 1s-5 1-5-2c0-5 8-5 8 1 0 5-6 7-9 4" stroke="#ddd"/></symbol>
<symbol id="h13" viewBox="0 0 24 24"><use href="#hex"/><circle cx="12" cy="12" r="5" stroke="#fff" stroke-width="2"/><path d="M12 7a5 5 0 0 1 0 10z" fill="#fff"/></symbol>
<symbol id="h14" viewBox="0 0 24 24"><use href="#hex"/><path d="M9 5v14M14 5v14M5 10h14M5 15h14" stroke="#fff" stroke-width="1.500"/></symbol>
<symbol id="h15" viewBox="0 0 24 24"><use href="#hex"/><path d="M6 12h12M8 9l-2 3 2 3M16 9l2 3-2 3" stroke="#fff" stroke-width="1.500"/></symbol>
<symbol id="h16" viewBox="0 0 24 24"><use href="#hex"/><circle cx="12" cy="12" r="5" fill="#eee"/><path d="M12 9v3h3" stroke="#222"/></symbol>
<symbol id="sq" viewBox="0 0 24 24"><rect x="2" y="2" width="20" height="20" rx="2" fill="currentColor" stroke="#444"/></symbol>
<symbol id="s1" viewBox="0 0 24 24"><use href="#sq"/><path d="M12 6v7M9 11l3 4 3-4M6 18h12" stroke="#111" stroke-width="2"/></symbol>
<symbol id="s2" viewBox="0 0 24 24"><use href="#sq"/><path d="M7 6h10v12H7z" fill="#222"/><path d="M9 7h6v5H9z" fill="#fff"/></symbol>
<symbol id="s3" viewBox="0 0 24 24"><use href="#sq"/><path d="M6 6h12v12H6z" fill="#555"/></symbol>
<symbol id="s4" viewBox="0 0 24 24"><use href="#sq"/><path d="M5 8h14M5 12h14M5 16h14" stroke="#111" stroke-width="1.500"/></symbol>
<symbol id="s5" viewBox="0 0 24 24"><use href="#sq"/><path d="M5 17l4-7 1 6 4-7v6l4-6" stroke="#a40" stroke-width="2"/></symbol>
<symbol id="s6" viewBox="0 0 24 24"><circle cx="12" cy="12" r="10" fill="#777"/><circle cx="12" cy="12" r="6" fill="#222"/></symbol>
<symbol id="s7" viewBox="0 0 24 24"><use href="#sq"/><path d="M4 18h6v-6H4zM14 18h6v-6h-6z" fill="#fff"/><path d="M10 5h5v7h-5z" fill="#c22"/><path d="M13 13h6v5h-6z" fill="#36c"/></symbol>
<symbol id="s8" viewBox="0 0 24 24"><use href="#sq"/><path d="M3 11h8v3h10" stroke="#a05" stroke-width="1.500"/></symbol>
<symbol id="s9" viewBox="0 0 24 24"><use href="#sq"/><path d="M4 4h5v5H4zM14 4h5v6h-5zM8 12h6v7H8z" fill="#172" stroke="none"/><path d="M15 14h5v5h-5z" fill="#af8" stroke="none"/></symbol>
<symbol id="s10" viewBox="0 0 24 24"><circle cx="12" cy="12" r="10" fill="#222"/><path d="M12 5v7h6M12 12l-5 4" stroke="#fff" stroke-width="1.500"/></symbol>
<symbol id="s11" viewBox="0 0 24 24"><path d="M12 2v20M3 10l9 6 9-6" stroke="#222"/><path d="M3 10l9-5v11z" fill="#2a4"/><path d="M12 5l9 5-9 6z" fill="#c55"/><path d="M5 12l7 8v-6z" fill="#36c"/></symbol>
<symbol id="s12" viewBox="0 0 24 24"><g stroke-width="3.500"><path d="M12 3a9 9 0 0 1 8 5" stroke="#e33"/><path d="M20 8a9 9 0 0 1-2 11" stroke="#c4e"/><path d="M18 19a9 9 0 0 1-11 0" stroke="#47f"/><path d="M7 19a9 9 0 0 1-3-11" stroke="#3c7"/><path d="M4 8a9 9 0 0 1 8-5" stroke="#ec3"/></g><circle cx="12" cy="12" r="6" fill="#fff" stroke="none"/></symbol>
<symbol id="s13" viewBox="0 0 24 24"><use href="#sq"/><path d="M3 8c6 0 6 4 8 9h3c1-6 3-9 7-9V5H3z" fill="#e82"/></symbol>
<symbol id="s14" viewBox="0 0 24 24"><use href="#sq"/><path d="M6 18c8 0 4-12 12-12M5 5v14h14" stroke="#111" stroke-width="1.500"/></symbol>
<symbol id="s21" viewBox="0 0 24 24"><use href="#sq"/><path d="M6 10l5-4 4 3M11 18c4-1 5-4 1-5h4" stroke="#333" stroke-width="1.500"/></symbol>
<symbol id="s15" viewBox="0 0 24 24"><circle cx="12" cy="12" r="5"/><circle cx="12" cy="12" r="1.500" fill="#222"/><path d="M5 5c-4 4-4 10 0 14M19 5c4 4 4 10 0 14"/></symbol>
<symbol id="film" viewBox="0 0 24 24"><path d="M1 3h22v17H1z" fill="#eee"/><path d="M1 20h22" stroke-width="5" stroke-dasharray="2 1"/></symbol>
<symbol id="cherry" viewBox="0 0 24 24"><path d="M7 15c0-6 2-9 5-12 1 5 3 8 5 12" stroke="#263"/><circle cx="7" cy="17" r="4" fill="#e22" stroke="#900"/><circle cx="17" cy="17" r="4" fill="#e22" stroke="#900"/><path d="M12 3l6 1-3 3z" fill="#3a3"/></symbol>
<symbol id="s19" viewBox="0 0 24 24"><circle cx="12" cy="11" r="7" fill="#ccc" stroke-width="2.500"/></symbol>
<symbol id="tree" viewBox="0 0 24 24"><rect x="2" y="2" width="20" height="20" fill="#999"/><path d="M12 21v-9M12 15L5 9M12 15l7-6M12 12V5M8 12V6M16 12V6" stroke-width="2.500"/></symbol>
<symbol id="ar" viewBox="0 0 24 24"><path d="M3 9h9V4l9 8-9 8v-5H3z" fill="currentColor"/></symbol>
<symbol id="s20" viewBox="0 0 24 24"><circle cx="9" cy="9" r="6" fill="#daa"/><circle cx="14" cy="14" r="6" fill="#d48"/><circle cx="14" cy="14" r="2" fill="#fff"/></symbol>
<symbol id="flask" viewBox="0 0 24 24"><path d="M10 3h4v7l5 10H5l5-10z" fill="#fff"/><path d="M8 14h8l3 6H5z" fill="#e37" stroke="none"/></symbol>
</svg>

<section class="rhino">
  <header class="title">
    <svg class="logo" viewBox="0 0 26 26"><path d="M0 0h26v26H0z" fill="#222"/><path d="M3 8l5 7 4-4 4 3 7-9c1 6-2 12-8 19-3-4-8-8-12-16z" fill="#eee"/><path d="M12 2h13v6z" fill="#666"/></svg>
    <h1>Remeshing_Nesting_x100_20191105.3dm (4291 KB) - Rhinoceros Educational Lab License (64-bit) - [Top]</h1>
    <div class="winctl"><button aria-label="Minimize"><svg viewBox="0 0 18 18"><path d="M1 8h16"/></svg></button><button aria-label="Maximize"><svg viewBox="0 0 18 18"><path d="M1 1h16v16H1z"/></svg></button><button aria-label="Close"><svg viewBox="0 0 18 18"><path d="M1 1l16 16M17 1L1 17"/></svg></button></div>
  </header>
  <nav class="menu"><a href="#">File</a><a href="#">Edit</a><a href="#">View</a><a href="#">Curve</a><a href="#">Surface</a><a href="#">Solid</a><a href="#">Mesh</a><a href="#">Dimension</a><a href="#">Transform</a><a href="#">Tools</a><a href="#">Analyze</a><a href="#">Render</a><a href="#">Panels</a><a href="#">V-Ray</a><a href="#">Help</a></nav>
  <div class="history">
    <div class="log"><p>Command: Group</p><p>Command: _RhinoNestWizard</p><p>Select curves to optimize ( Quantity=1 ):</p><p>Select curves to optimize. Press Enter when done ( Quantity=1 ):</p><p>Select curves to optimize. Press Enter when done ( Quantity=1 ):</p><p>Select curves to optimize ( Quantity=1 ):</p><p>Select sheet (must be rectangular):</p></div>
    <div class="sbar"><svg viewBox="0 0 12 8"><path d="M2 7l4-5 4 5"/></svg><i></i><svg viewBox="0 0 12 8"><path d="M2 1l4 5 4-5"/></svg></div>
  </div>
  <div class="prompt"><label for="cmd">Command:</label><input id="cmd" type="text"><div class="spin"><button aria-label="Previous"><svg viewBox="0 0 10 8"><path d="M5 1l4 6H1z"/></svg></button><button aria-label="Next"><svg viewBox="0 0 10 8"><path d="M5 7l4-6H1z"/></svg></button></div></div>
  <nav class="tabs"><button>Standard</button><button>CPlanes</button><button>Set View</button><button>Display</button><button class="on">Select</button><button>Viewport Layout</button><button>Visibility</button><button>Transform</button><button>Curve Tools</button><button>Surface Tools</button><button>Solid Tools</button><button>Mesh Tools</button><button>Render Tools</button><button>Drafting</button><button>New in</button><span class="more">»</span><svg class="cog" viewBox="0 0 16 16"><circle cx="8" cy="8" r="6" stroke-dasharray="2 1"/><circle cx="8" cy="8" r="2"/></svg></nav>
  <div class="row sel">
    <button><svg class="y warm"><use href="#shapes"/></svg></button><button><svg class="w pale"><use href="#shapes"/></svg></button><button><svg><use href="#invert"/></svg></button><button><svg class="y"><use href="#cube"/></svg></button><button><svg><use href="#undo"/></svg></button><button><svg><use href="#tag"/></svg></button><button><svg><use href="#idc"/></svg></button><button><svg class="y"><use href="#cube"/></svg></button><button><svg><use href="#rgb"/></svg></button><button><svg><use href="#slab"/></svg></button><button><svg><use href="#pts"/></svg></button><button><svg><use href="#dots"/></svg></button><button><svg class="y"><use href="#solids"/></svg></button><button><svg><use href="#fan"/></svg></button><button><svg><use href="#hatch"/></svg></button><button><svg><use href="#span"/></svg></button><button><svg><use href="#dims"/></svg></button><button><svg class="br"><use href="#tri3"/></svg></button><button><svg class="k"><use href="#ball"/></svg></button><button class="d"><svg><use href="#open"/></svg></button><button class="d"><svg class="y"><use href="#srf"/></svg></button><button class="d"><svg class="y"><use href="#mesh"/></svg></button><button class="d"><svg><use href="#spiral"/></svg></button><button class="d"><svg><use href="#spots"/></svg></button><button class="d"><svg><use href="#chain"/></svg></button><button class="d"><svg><use href="#pyr"/></svg></button><hr><button><svg class="g"><use href="#ball"/></svg></button><button><svg class="g"><use href="#cube"/></svg></button><button><svg><use href="#ring"/></svg></button><button><svg><use href="#grp"/></svg></button><button><svg><use href="#brush"/></svg></button><button><svg class="w"><use href="#zoomi"/></svg></button><button><svg><use href="#funnel"/></svg></button>
  </div>
  <div class="row">
    <div class="grpb g1"><button class="d"><svg class="r"><use href="#egg"/></svg></button><button class="d"><svg class="bb"><use href="#egg"/></svg></button><button class="d"><svg><use href="#hexz"/></svg></button><button class="d"><svg><use href="#glow"/></svg></button><button class="d"><svg><use href="#gbox"/></svg></button><button class="d"><svg><use href="#cone"/></svg></button><button class="d"><svg><use href="#cage"/></svg></button><span class="more">»</span></div>
    <div class="grpb g2"><button><svg><use href="#power"/></svg></button><button><svg><use href="#m1"/></svg></button><button class="d"><svg><use href="#m2"/></svg></button><button><svg><use href="#m3"/></svg></button><button><svg><use href="#m4"/></svg></button><button><svg><use href="#m5"/></svg></button><button><svg><use href="#m6"/></svg></button><button><svg><use href="#m7"/></svg></button><button><svg><use href="#m8"/></svg></button><button><svg><use href="#m9"/></svg></button><button><svg><use href="#m10"/></svg></button><button><svg><use href="#m11"/></svg></button><button><svg><use href="#m12"/></svg></button><button><svg><use href="#m13"/></svg></button><button><svg><use href="#m14"/></svg></button><button><svg><use href="#m15"/></svg></button><button><svg><use href="#m16"/></svg></button><button><svg><use href="#m17"/></svg></button><button><svg><use href="#m18"/></svg></button><button><svg><use href="#m4"/></svg></button><button><svg><use href="#m19"/></svg></button><button><svg><use href="#m20"/></svg></button><button><svg><use href="#m21"/></svg></button><button><svg><use href="#m22"/></svg></button><button><svg><use href="#m23"/></svg></button><button><svg><use href="#m23"/></svg></button><button><svg><use href="#m24"/></svg></button><button><svg><use href="#m25"/></svg></button><button><svg><use href="#m26"/></svg></button><button><svg><use href="#m27"/></svg></button><button><svg><use href="#m28"/></svg></button><button><svg><use href="#m29"/></svg></button><button><svg><use href="#m30"/></svg></button><span class="more">»</span></div>
    <div class="grpb g3"><button><svg><use href="#arc"/></svg></button><button><svg><use href="#b2"/></svg></button><button><svg><use href="#b3"/></svg></button><button><svg><use href="#b4"/></svg></button><button><svg><use href="#b5"/></svg></button><button><svg><use href="#b6"/></svg></button><button><svg><use href="#b7"/></svg></button><button><svg><use href="#lcube"/></svg></button><button><svg><use href="#lcube"/></svg></button><button><svg><use href="#rainb"/></svg></button><button><svg><use href="#heatb"/></svg></button><span class="more">»</span></div>
    <div class="grpb g4"><button><svg class="b"><use href="#globe"/></svg></button><span class="more">»</span></div>
  </div>
  <div class="row">
    <div class="grpb g1"><button><svg><use href="#sun"/></svg></button><button><svg><use href="#plane"/></svg></button><button><svg class="o"><use href="#ball"/></svg></button><button><svg class="o"><use href="#globe"/></svg></button><button><svg><use href="#dome"/></svg></button><button><svg><use href="#spot"/></svg></button><button><svg><use href="#spot"/></svg></button><span class="more">»</span></div>
    <div class="grpb g5"><button class="vr">M<svg class="o"><use href="#vm"/></svg></button><button class="vr">O<svg><use href="#vt"/></svg></button><button class="vr">F<svg><use href="#vt"/></svg></button><button class="vr">R<svg class="sb"><use href="#vm"/></svg></button><button class="vr">RT<svg class="sb"><use href="#vm"/></svg></button><button class="vr">?<svg class="sb"><use href="#vm"/></svg></button><button><svg><use href="#vmesh"/></svg></button><button><svg><use href="#sun"/></svg></button><span class="more">»</span></div>
    <div class="grpb g6"><button><svg><use href="#smile"/></svg></button><button><svg class="w"><use href="#globe"/></svg></button><button><svg class="w"><use href="#globe"/></svg></button><button><svg class="g"><use href="#globe"/></svg></button><button><svg class="bb"><use href="#ball"/></svg></button><button><svg class="b"><use href="#cube"/></svg></button><button class="d"><svg><use href="#crv"/></svg></button><button><svg><use href="#ext"/></svg></button><button><svg class="y"><use href="#zoomi"/></svg></button><button><svg class="g"><use href="#bulbx"/></svg></button><button><svg class="ly"><use href="#bulb"/></svg></button><button><svg class="g"><use href="#bulb"/></svg></button><button><svg><use href="#arc"/></svg></button><button><svg><use href="#line"/></svg></button><button><svg><use href="#pline"/></svg></button><button class="d"><svg><use href="#pt"/></svg></button><button><svg><use href="#cloud"/></svg></button><button class="d"><svg class="b"><use href="#cube"/></svg></button><span class="more">»</span></div>
    <div class="grpb g7"><button><svg><use href="#nest"/></svg></button><button><svg><use href="#docs"/></svg></button><button><svg><use href="#n12"/></svg></button><button><svg><use href="#n1s"/></svg></button><button><svg><use href="#n1t"/></svg></button><button><svg><use href="#n1s"/></svg></button><button><svg><use href="#rb"/></svg></button><button><svg><use href="#rv"/></svg></button><button><svg><use href="#bs"/></svg></button><button><svg class="b"><use href="#cube"/></svg></button><button><svg><use href="#star"/></svg></button><button><svg><use href="#arcs"/></svg></button><button><svg><use href="#tr"/></svg></button><button><svg><use href="#bl"/></svg></button><button><svg><use href="#fold"/></svg></button><button><svg><use href="#arm"/></svg></button><button><svg><use href="#rsq"/></svg></button><button><svg><use href="#gsq"/></svg></button><button><svg><use href="#ckc"/></svg></button><span class="more">»</span></div>
  </div>

  <div class="main">
    <aside class="palette">
      <button><svg><use href="#arrow"/></svg></button><button class="d"><svg><use href="#pt"/></svg></button>
      <button class="d"><svg><use href="#pline"/></svg></button><button class="d"><svg><use href="#arc"/></svg></button>
      <button class="d"><svg><use href="#circ"/></svg></button><button class="d"><svg><use href="#elli"/></svg></button>
      <button class="d"><svg><use href="#pie"/></svg></button><button class="d"><svg><use href="#rect"/></svg></button>
      <button class="d"><svg><use href="#poly"/></svg></button><button class="d"><svg><use href="#fil"/></svg></button>
      <button class="d"><svg><use href="#sp"/></svg></button><button class="d"><svg><use href="#fs"/></svg></button>
      <button class="d"><svg class="b"><use href="#cube"/></svg></button><button class="d"><svg><use href="#sph2"/></svg></button>
      <button class="d"><svg><use href="#b6"/></svg></button><button class="d"><svg><use href="#surf2"/></svg></button>
      <button><svg><use href="#gear2"/></svg></button><button><svg><use href="#boom"/></svg></button>
      <button><svg><use href="#trim"/></svg></button><button><svg><use href="#split"/></svg></button>
      <button class="d"><svg><use href="#bool"/></svg></button><button><svg><use href="#bool2"/></svg></button>
      <button><svg><use href="#blend"/></svg></button><button class="d"><svg><use href="#crv"/></svg></button>
      <button><svg><use href="#tt"/></svg></button><button class="d"><svg><use href="#mv"/></svg></button>
      <button><svg><use href="#cp"/></svg></button><button><svg><use href="#rot"/></svg></button>
      <button class="d"><svg><use href="#cbox"/></svg></button><button class="d"><svg><use href="#ups"/></svg></button>
      <button class="d"><svg><use href="#arr"/></svg></button><button class="d"><svg><use href="#aln"/></svg></button>
      <button class="d"><svg><use href="#bks"/></svg></button><button class="d"><svg><use href="#chk"/></svg></button>
      <button class="d"><svg class="g"><use href="#solids"/></svg></button><button class="d"><svg><use href="#hand"/></svg></button>
    </aside>
    <div class="viewport">
      <svg class="drawing" viewBox="69 418 1259 1082" preserveAspectRatio="xMinYMin slice">
        <defs>
          <pattern id="minor" x="132.700" y="652" width="28.150" height="28.150" patternUnits="userSpaceOnUse"><path d="M.5 0V28.150M0 .5H28.150" stroke="#8a929e" stroke-opacity=".45"/></pattern>
          <pattern id="major" x="132.700" y="652" width="281.500" height="281.500" patternUnits="userSpaceOnUse"><path d="M.5 0V281.500" stroke="#777f8a"/><path d="M0 .5H281.500" stroke="#8c848e"/></pattern>
          <path id="bandsA" vector-effect="non-scaling-stroke" d="M100 95L98 492M105 86L240 84M243 95L107 492M265 118L188 350M275 115L336 185M336 192L194 354M347 120V430M352 108L546 86M550 98L355 432M578 115L353 502M587 118V345M585 352L362 512M647 95L587 520M656 95L651 510M592 528L646 518M295 300L126 518M304 303L340 515M130 530L335 524M414 518L534 442M540 446L567 505M415 534L565 514
          M682 86H895M678 98L693 268M897 98L702 272M915 86H1055M911 100L1024 255M1062 92L1033 252M1080 90L1215 88M1077 100L1115 262M1218 98L1123 263M828 208L715 312M838 210V420M715 325L830 425M874 188L855 355M884 182L948 235M948 250L864 358M975 277L855 424M985 280L995 455M856 434L990 460M1068 248L1008 355M1088 262L1018 365M1068 242L1085 248M1108 308L1012 415M1118 312L1132 525M1012 428L1124 526M1185 230L1140 295M1193 235L1183 527M1142 305L1172 527M1207 180L1218 305M1238 165L1228 307M1207 175L1224 158M1215 345L1203 525M1229 345V515M1212 533L1225 522M683 443L1068 518M680 456L738 520M743 526L1068 532
          M1257 115L1274 240M1290 92L1283 240M1260 105L1278 88M1312 90L1300 275M1323 90L1368 205M1368 215L1308 280M1364 88L1456 82M1360 100L1447 205M1463 92L1456 200M1385 190L1460 288M1378 205L1443 315M1460 292L1450 315M1380 260L1310 330M1388 262V408M1310 340L1382 415M1258 312L1256 440M1292 308L1268 440M1262 305L1284 298M1483 350L1400 402M1492 352L1522 458M1398 415L1515 466M1315 393L1266 520M1324 395L1353 520M1268 532H1350M1377 455L1537 512M1370 463L1388 525M1396 530L1537 525M1480 100L1496 222M1505 88V222M1482 98L1494 82M1518 95V208M1522 90L1566 96M1515 268L1548 435M1566 390L1556 435M1520 260L1566 230
          M22 668L180 645M182 645L250 695M252 695L336 654M342 656L373 698M375 698L468 676M486 565L470 680M496 562L494 710M470 690L486 708M505 698L592 632M598 633L656 695M660 695L806 568M812 568L1044 695M1048 695L1108 615M1116 616L1170 695M1174 695L1266 643M1272 646L1293 698M1295 698L1390 670M1385 575L1403 700M1412 550V705M1388 565L1402 545M1420 698L1568 655M22 712H490M502 712H1408M1420 712H1568"/>
          <path id="bandsB" vector-effect="non-scaling-stroke" d="M0 92L46 102M46 120L0 168M97 82L40 200M110 85L105 210M42 210L98 216M122 115L124 290M188 95L134 290M128 105L180 85M218 110L230 275M242 90L240 275M222 100L232 85M196 165L145 355M206 165V330M205 340L150 368M98 285L30 350M106 290L110 430M30 365L103 438M232 308L208 435M242 308L240 435M213 445H235M20 220L0 400M15 415L12 520M25 410L112 510M15 532L108 525M126 415L124 520M136 410L220 502M130 532L220 518
          M272 84H365M268 96L352 205M370 95L362 200M390 112L382 280M453 95L390 280M395 105L448 86M268 245L278 378M278 245L306 380M280 386H300M358 225L318 268M368 230L366 438M313 278L355 436M488 192L422 262M498 198L496 342M422 272L488 346M400 312L378 395M408 310L485 432M382 405L478 440M276 415L270 520M288 412L372 510M275 532L370 522M385 452L388 520M394 445L498 500M395 530L498 516M512 92V220M573 98L520 222M518 82H568M584 98L586 220M650 98L594 222M590 90H643M680 98L630 228M690 98V230M634 238H684M702 92V220M762 95L710 225M708 84H758M790 98L742 230M801 98L800 212M750 240L802 222M520 265L565 395M574 250V395M522 258L564 242M592 300L587 430M655 308L596 432M600 294H650M682 285L722 402M732 258V400M682 275L722 252M772 295L812 408M822 265V405M770 285L812 258M514 378V520M524 378L574 485M572 492L522 525M645 402L588 520M652 405L650 525M590 532H642M668 380V528M680 378L722 495M720 506L675 532M765 385L742 522M776 385L800 500M752 530L798 518
          M848 92L940 80M848 102L960 152M945 88L966 142M850 155L942 188M848 165L938 262M946 198V255M848 235L882 372M856 228L914 315M912 322L890 372M945 310L912 440M962 310L965 415M965 430L920 452M850 455V515M858 452L962 512M856 528H962M1022 110L1020 220M1080 95L1030 222M1028 100L1075 85M962 250L1000 345M1006 205V345M964 240L990 200M1022 290L1058 390M1070 245L1062 390M1022 280L1058 240M980 385L985 530M990 382L1028 485M1026 495L995 535M1100 80L1087 225M1113 80L1117 210M1097 230L1115 215M1132 105L1155 230M1160 85L1162 230M1133 98L1148 82M1178 100L1168 230M1213 95L1182 230M1180 95L1208 82M1225 84L1335 80M1225 95L1345 118M1340 88L1346 108M1380 100L1378 232M1410 95L1388 232M1380 95L1398 85M1222 140L1202 275M1238 140L1230 275M1210 285L1230 278M1246 155L1248 290M1276 150L1256 290M1250 148L1268 142M1290 155L1306 284M1320 148L1316 284M1290 148L1312 140M1335 150L1332 284M1368 152L1342 284M1338 145L1362 140M1132 275L1158 410M1168 265L1166 410M1132 270L1158 258M1192 322L1175 465M1207 322L1200 465M1180 475L1202 468M1232 315L1218 458M1247 315L1246 450M1225 462L1245 455M1265 320L1262 460M1275 320L1290 440M1268 468L1290 452M1366 290L1390 412M1403 275L1402 412M1368 280L1390 268M1100 392L1045 520M1108 395L1105 520M1050 532L1095 520M1116 380V525M1128 382L1152 515M1125 535L1148 525M1320 382L1303 520M1332 382V515M1312 528L1328 518M1350 382L1345 518M1360 382L1382 508M1352 530L1378 518M1162 520L1268 498M1162 535H1288M1275 502L1290 520
          M1424 84H1532M1424 96L1538 128M1426 160L1432 290M1462 155L1442 290M1428 152L1450 145M1474 165L1490 298M1512 158L1500 298M1480 158L1502 152M1530 155L1520 290M1450 315L1436 455M1466 315V440M1445 465L1468 450M1522 322L1508 462M1535 322L1533 460M1515 472L1536 465M1434 495V525M1438 486L1538 512M1440 530L1538 534
          M0 658L32 646M36 648L94 698M98 695L180 652M186 654L217 698M222 696L322 672M328 675L340 698M344 696L440 672M446 675L456 698M458 695L535 628M542 630L582 695M583 695L648 550M658 550L824 695M826 695L886 615M892 615L946 698M950 696L1042 645M1048 648L1070 698M1072 698L1170 672M1176 674L1186 698M1190 698L1282 674M1288 676L1304 698M1308 698L1438 645M1444 648L1478 698M1480 698L1538 664M0 712H1540"/>
        </defs>
        <rect x="69" y="418" width="1260" height="1090" fill="#9ca3ad"/>
        <rect x="77" y="418" width="1182" height="1082" fill="url(#minor)"/>
        <rect x="69" y="418" width="1190" height="1082" fill="url(#major)"/>
        <g fill="none" stroke="#444"><path d="M97 999H1328M97 1165H1328M97 999v166M333 999v166M570 999v166M807 999v166M1043 999v166M1280 999v166"/></g>
        <g transform="translate(60 980) scale(.4082 .3333)" fill="none"><path class="thin" d="M170 95L107 258L175 290M300 155L232 238L265 255M445 105L350 270M352 175L445 262M472 315L540 375M580 235L475 415M625 310L645 315M645 95L618 522M215 418L302 516M315 410L232 520M485 487L490 515M485 487L540 478M745 96L797 188M788 96L695 178M985 94L1043 162M1035 94L975 168M1150 96L1100 185M1085 110L1160 175M775 258V372M715 317H838M908 188L902 278M860 270L905 278M920 355L985 440M980 380L925 440M700 482L870 517L875 490M1063 365L1070 450M1018 428L1128 418M1168 250V378H1190M1300 185H1345M1320 95L1335 190M1390 165L1450 95M1400 95L1430 140M1345 275V390M1310 337H1388M1480 360L1460 430M1410 400L1510 440M1295 460L1335 480L1310 520M1385 490L1455 520L1462 490M22 678H215M53 678V706M310 660V706M580 640V706M550 670H630M735 637H945M851 590V706M1108 620V706M1085 660H1140M1230 670V706M1540 665V706"/>
          <use href="#bandsA" class="o1"/><use href="#bandsA" class="o2"/></g>
        <g transform="translate(700 980) scale(.4082 .3333)" fill="none"><path class="thin" d="M70 300V430M30 362H110M75 150L100 160M155 105L150 190M190 180L180 310M15 430L70 520M60 460L30 520M130 430L190 520M185 460L150 520M320 90L355 140M350 96L310 150M410 108L400 200M340 240V420M318 333H366M458 210V330M422 268H496M400 340L430 410M440 360L395 410M285 430L335 520M330 460L290 520M395 480L470 500M545 90L530 180M615 95L600 180M655 130L650 220M735 95L715 170M785 150L770 230M545 260V380M520 325H574M625 300L600 380M710 270V390M682 328H732M800 270V390M772 335H822M535 400V510M514 450H555M630 430L600 500M690 400V520M668 455H705M770 400L765 510M745 455H790M880 95L920 130M870 180L920 230M870 250L890 350M940 350L925 430M870 470L900 520M1050 100L1035 200M985 230V320M1045 250V380M1020 318H1066M1000 400V510M980 455H1015M1080 440L1065 500M1140 85V200M1190 100L1178 200M1225 160L1215 260M1262 160L1252 260M1310 155V260M1350 155L1340 260M1150 275V380M1385 285V390M1195 340L1185 450M1235 330L1230 440M1275 335V450M1320 400L1312 500M1362 400L1360 500M1200 515L1260 525M1440 160V270M1492 170V280M1455 330L1448 450M620 629H740M703 590V706M518 640V706M495 667H560M155 660V706M886 620V706M865 660H915M1005 670V706M1390 665V706M0 680H70M278 680V706M397 685V706"/>
          <use href="#bandsB" class="o1"/><use href="#bandsB" class="o2"/></g>
        <path d="M99.500 1446V1470.500H124" fill="none" stroke="#666e78"/><text class="axis" x="101" y="1448">y</text><text class="axis" x="127" y="1473">x</text>
      </svg>
      <button class="vlabel">Top<span></span></button>
    </div>
    <aside class="props">
      <nav class="ptabs"><button class="on"><svg viewBox="0 0 24 24"><use href="#s12"/></svg>Properties</button><button><svg viewBox="0 0 24 24"><path d="M3 4h18v12H3zM8 20h8M12 16v4" fill="#ddd" stroke="#333" stroke-width="2"/></svg>Display</button><button><svg viewBox="0 0 24 24"><path d="M2 6l10-3 10 3-10 4z" fill="#e33"/><path d="M2 11l10 4 10-4v3l-10 4-10-4z" fill="#fff"/><path d="M4 17l8 3 10-3v2l-10 4z" fill="#36c"/></svg>Layers</button><button><svg viewBox="0 0 24 24"><circle cx="12" cy="11" r="8" fill="#f73" stroke="#e84"/></svg>Sun</button><svg class="cog" viewBox="0 0 16 16"><circle cx="8" cy="8" r="6" stroke-dasharray="2 1"/><circle cx="8" cy="8" r="2"/></svg></nav>
      <div class="snip">Window Snip</div>
      <table>
        <colgroup><col class="k1"><col></colgroup>
        <tr class="sec"><th colspan="2">Viewport</th></tr>
        <tr><th>Title</th><td>Top</td></tr>
        <tr><th></th><td class="ro">1501</td></tr>
        <tr><th></th><td class="ro">1287</td></tr>
        <tr><th></th><td><div class="combo"><select aria-label="Projection"><option>Parallel</option></select><span class="chev"></span></div></td></tr>
        <tr class="sec"><th colspan="2"></th></tr>
        <tr><th></th><td class="ro">50.0</td></tr>
        <tr><th></th><td>90.0</td></tr>
        <tr><th></th><td>30.117</td></tr>
        <tr><th></th><td>9.021</td></tr>
        <tr><th></th><td>61.773</td></tr>
        <tr><th></th><td class="bt"><button>Place...</button></td></tr>
        <tr class="sec"><th colspan="2"></th></tr>
        <tr><th></th><td>30.117</td></tr>
        <tr><th></th><td>9.021</td></tr>
        <tr><th></th><td>0.001</td></tr>
        <tr><th>Location</th><td class="bt"><button>Place...</button></td></tr>
        <tr class="sec"><th colspan="2">Wallpaper</th></tr>
        <tr><th>Filename</th><td><div class="combo"><span>(none)</span><button class="dots">...</button></div></td></tr>
        <tr><th><label for="show">Show</label></th><td><input id="show" type="checkbox" class="pc" checked></td></tr>
        <tr><th><label for="gray">Gray</label></th><td><input id="gray" type="checkbox" class="pc" checked></td></tr>
      </table>
    </aside>
  </div>

  <nav class="vtabs"><button>Perspective</button><button class="on">Top</button><button>Front</button><button>Right</button><button class="add">✧</button></nav>
  <div class="osnap"><label><input type="checkbox" checked>End</label><label><input type="checkbox">Near</label><label><input type="checkbox">Point</label><label><input type="checkbox" checked>Mid</label><label><input type="checkbox">Cen</label><label><input type="checkbox" checked>Int</label><label><input type="checkbox">Perp</label><label><input type="checkbox">Tan</label><label><input type="checkbox">Quad</label><label><input type="checkbox">Knot</label><label><input type="checkbox" checked>Vertex</label><label><input type="checkbox" class="part">Project</label><label class="dis"><input type="checkbox" class="full">Disable</label></div>
  <footer class="status"><span class="c1 lit">World</span><span class="c2">x 37.671</span><span class="c2">y 10.675</span><span class="c2">z 0.000</span><span class="c2">Millimet</span><span class="c3"><i></i>Tree</span><span class="c4">Grid Sn</span><span class="c5">Ortho</span><span class="c6">Plana</span><span class="c6">Osna</span><span class="c7">SmartTra</span><span class="c8 lit">Gumb</span><span class="c9">Record Hist</span><span class="c10">Filte</span><span class="c11">Memory use: 1062 MB</span></footer>

  <div class="dialog" role="dialog" aria-labelledby="dlg">
    <header><h2 id="dlg">RhinoNest Wizard</h2><button class="x" aria-label="Close">×</button>
      <svg viewBox="0 0 40 40"><path d="M0 0h40v40H0z"/><path d="M2 2h36v36H2z" stroke="#ccc"/><ellipse cx="19" cy="27" rx="9" ry="6" transform="rotate(-40 19 27)" stroke="#fff" stroke-width="2"/><ellipse cx="20" cy="27" rx="5" ry="3" transform="rotate(-40 20 27)" stroke="#fff"/><path d="M15 22c-2-6 5-6 3-12l5-4 1 7c4 4 5 7 2 11" stroke="#fff" stroke-width="2"/><path d="M28 9l7 4M35 8l-6 7" stroke="#ee3" stroke-width="2"/><path d="M17 19l5-3" stroke="#ee3" stroke-width="2"/></svg>
    </header>
    <div class="body"><label for="rep">Report</label>
      <div class="rep"><textarea id="rep" readonly>Objects in sheet 1: 7 Area:
65.75% Left over: 34.25%
Objects in sheet 2: 12 Area:
58.73% Left over: 41.27%
Objects in sheet 3: 20 Area:
54.55% Left over: 45.45%</textarea><div class="sbar"><svg viewBox="0 0 12 8"><path d="M2 7l4-5 4 5"/></svg><i></i><svg viewBox="0 0 12 8"><path d="M2 1l4 5 4-5"/></svg></div></div>
      <div class="acts"><button class="cpy">Copy to Clipboard</button><button>Export to text file</button></div>
    </div>
    <footer><button class="back">Back</button><button class="fin">Finish</button><button>Cancel</button><button>Help</button></footer>
  </div>
</section>

<section class="gh">
  <header class="title"><h1>Grasshopper - Remeshing_Nesting_x100_20191019*</h1>
    <div class="winctl"><button aria-label="Minimize"><svg viewBox="0 0 18 18"><path d="M1 8h16"/></svg></button><button aria-label="Maximize"><svg viewBox="0 0 18 18"><path d="M1 1h16v16H1z"/></svg></button><button aria-label="Close"><svg viewBox="0 0 18 18"><path d="M1 1l16 16M17 1L1 17"/></svg></button></div>
  </header>
  <nav class="gmenu"><a href="#">File</a><a href="#">Edit</a><a href="#">View</a><a href="#">Display</a><a href="#">Solution</a><a href="#">Help</a><span>Remeshing_Nesting_x100_20191019</span></nav>
  <nav class="gtabs"><button class="on">Prm</button><button>Math</button><button>Set</button><button>Vec</button><button>Crv</button><button>Srf</button><button>Msh</button><button>Int</button><button>Trns</button><button>Dis</button><button>TSplines</button><button>Wb</button><button>K</button><button>K</button><button>L</button><button>T</button><button>L</button></nav>
  <div class="ribbon">
    <div class="rg"><div><svg><use href="#h1"/></svg><svg><use href="#h2"/></svg></div><div><svg><use href="#h3"/></svg><svg><use href="#h4"/></svg><svg><use href="#h5"/></svg><svg><use href="#h6"/></svg><svg><use href="#h7"/></svg><svg><use href="#h8"/></svg></div><div><svg><use href="#h9"/></svg><svg><use href="#h9"/></svg><svg><use href="#h10"/></svg><svg><use href="#h11"/></svg><svg><use href="#h11"/></svg><svg><use href="#h11"/></svg></div><div><svg><use href="#h5"/></svg><svg><use href="#h12"/></svg></div></div>
    <div class="rg"><div><svg><use href="#h13"/></svg><span>7<svg><use href="#hex"/></svg></span><span class="s">0.1<svg><use href="#hex"/></svg></span><span>A<svg><use href="#hex"/></svg></span></div><div><svg><use href="#h10"/></svg><svg><use href="#h2"/></svg><span class="s">UC<svg><use href="#hex"/></svg></span><svg><use href="#h15"/></svg><svg><use href="#h14"/></svg><span class="s">ID<svg><use href="#hex"/></svg></span><svg><use href="#h14"/></svg><svg><use href="#h16"/></svg></div></div>
    <div class="rg"><div><svg class="lg"><use href="#s1"/></svg><svg class="y"><use href="#s5"/></svg></div><div><svg class="lg"><use href="#s2"/></svg><svg><use href="#s6"/></svg><svg class="lg"><use href="#s21"/></svg><svg class="lg"><use href="#s4"/></svg><svg class="lg"><use href="#s3"/></svg><svg class="lg"><use href="#s7"/></svg></div><div><svg class="pk"><use href="#s8"/></svg><svg class="gr"><use href="#s9"/></svg><span class="cal"><i>AUG</i>20</span><svg><use href="#s10"/></svg><svg><use href="#s11"/></svg><svg class="lg"><use href="#s13"/></svg><svg><use href="#s12"/></svg><svg class="lg"><use href="#s14"/></svg></div><div><svg><use href="#s15"/></svg><span class="f">3DM<svg><use href="#film"/></svg></span><span class="f">XYZ<svg><use href="#film"/></svg></span><span class="f">IMG<svg><use href="#film"/></svg></span></div></div>
    <div class="rg"><div><svg><use href="#cherry"/></svg><svg><use href="#tree"/></svg><svg><use href="#s19"/></svg><span class="abc">ABC</span></div><div><svg class="dg"><use href="#ar"/></svg><svg class="w"><use href="#ar"/></svg></div><div><svg><use href="#s20"/></svg><svg><use href="#flask"/></svg></div></div>
  </div>
  <div class="gbar">
    <button aria-label="Open"><svg viewBox="0 0 24 24"><path d="M5 3h10l4 4v13H5z" fill="#fff"/><path d="M2 10h17v12H2z" fill="#6c4" stroke="#382"/></svg></button><button aria-label="Save"><svg viewBox="0 0 24 24"><path d="M2 2h20v20H4l-2-2z" fill="#36b"/><path d="M6 3h12v8H6z" fill="#fff"/><path d="M7 15h10v7H7z" fill="#ddd"/></svg></button><hr>
    <div class="zoom"><select aria-label="Zoom"><option>156%</option></select><span class="chev"></span></div>
    <button aria-label="Zoom extents"><svg viewBox="0 0 24 24"><path d="M3 8V3h5M16 3h5v5M21 16v5h-5M8 21H3v-5M9 9l6 6M15 9l-6 6" stroke="#111" stroke-width="3"/></svg></button><b class="dd"></b><button aria-label="Views"><svg viewBox="0 0 24 24"><path d="M2 12C7 4 17 4 22 12 17 20 7 20 2 12z" fill="#fff"/><circle cx="12" cy="12" r="5" fill="#39c"/><circle cx="12" cy="12" r="2" fill="#000"/></svg></button><b class="dd"></b><button aria-label="Sketch"><svg viewBox="0 0 24 24"><path d="M21 3c-8 1-11 7-10 15 7 2 11-5 10-15z" fill="#e43" stroke="#911"/><path d="M11 18c-2 5-7 4-9-1 2-1 4 0 4-3" stroke-width="2"/></svg></button>
    <span class="gap"></span>
    <button aria-label="No preview"><svg viewBox="0 0 24 24"><ellipse cx="12" cy="17" rx="8" ry="5" fill="#444"/><path d="M5 13V7c4-5 10-5 14 0v6c-5 3-9 3-14 0z" fill="#ddd"/></svg></button><button aria-label="Wireframe"><svg viewBox="0 0 24 24"><path d="M3 15L12 3l9 4v5l-9 10-8-3z" fill="#fff"/><path d="M8 9l9 4M5 14l8 4"/></svg></button><button class="act" aria-label="Shaded"><svg viewBox="0 0 24 24"><path d="M3 14L11 3l9 3v8l-7 8-9-3z" fill="#c22"/><path d="M11 3l9 3-6 6-8-3z" fill="#e66" stroke="none"/></svg></button><hr class="wide"><button aria-label="Selected"><svg viewBox="0 0 24 24"><circle cx="12" cy="12" r="9" fill="#ddd"/><path d="M5 5a9 9 0 0 1 14 12z" fill="#3a3"/></svg></button><button aria-label="Mesh quality"><svg viewBox="0 0 24 24"><circle cx="12" cy="12" r="9" fill="#fff"/><path d="M12 3a9 9 0 0 1 0 18z" fill="#e82"/></svg></button><hr><button aria-label="Display"><svg viewBox="0 0 24 24"><circle cx="12" cy="12" r="9" fill="#6af" stroke="#148"/><circle cx="12" cy="12" r="9" fill="url(#shine)" stroke="none"/></svg></button><b class="dd end"></b>
  </div>
  <div class="canvas">
    <div class="zone z1"></div><div class="zone z2"></div><div class="grid"></div>
    <div class="note n1">TDM Solutions</div><div class="note n2 big">Nesting on Sheets</div><div class="note n3">TDM Solutions</div><div class="note n4">TDM Solutions</div><div class="note n5">TDM solutions</div>
    <svg class="wires" width="772" height="1377">
      <defs><g id="dw"><path d="M1962 310H2030M2155 310C2180 312 2172 342 2197 345M1984 492C2012 488 2016 465 2012 440C2008 415 2000 400 2002 388C2003 375 2015 368 2033 368M2312 367C2365 372 2370 395 2383 412S2420 438 2444 442M1885 745C1925 742 1936 735 1934 713C1933 690 1925 682 1919 673L1824 538C1808 515 1806 505 1809 498C1812 480 1830 470 1862 469M1728 767H1742M1885 745C1980 745 2000 755 2125 755M1885 745C2050 735 2095 650 2128 527C2155 400 2160 240 2290 200M1885 745C2010 735 2080 680 2128 610C2200 500 2250 408 2444 398M2284 808C2330 812 2322 860 2322 880C2324 915 2345 927 2363 928"/></g>
      <mask id="pill" maskUnits="userSpaceOnUse" x="1728" y="200" width="772" height="1377"><use href="#dw" stroke="#fff" stroke-width="8"/><use href="#dw" stroke="#000" stroke-width="2"/></mask></defs>
      <g transform="translate(-1728 -200)">
        <g class="dash"><g mask="url(#pill)"><use href="#dw" stroke="#352548" stroke-opacity=".8" stroke-width="8"/></g>
        <path d="M1728 311H1838" stroke="#a8a49c" stroke-width="7"/><path d="M1728 311H1838" stroke="#d4d0c8" stroke-width="3"/>
        <path d="M1885 745C2020 737 2060 680 2074 662" stroke="#2a1c3c" stroke-opacity=".7" stroke-width="8"/></g>
        <path class="solid" d="M2052 798C2085 798 2095 807 2125 807M2064 860H2125M2224 947C2290 947 2300 957 2363 957M2229 990C2290 990 2300 986 2363 986M2204 1096C2290 1096 2280 1015 2363 1015M2227 1200C2300 1195 2290 1105 2363 1102M2308 1277C2345 1277 2341 1245 2338 1220C2332 1180 2325 1162 2363 1160M2290 202L2406 206"/>
      </g>
    </svg>
    <div class="node c-rnrm"><ul class="in"><li>G</li></ul><b>RNRM</b><ul class="out"><li>G</li></ul></div>
    <div class="node c-move"><ul class="in"><li>G</li><li>T</li></ul><b>Move</b><ul class="out"><li>G</li><li>X</li></ul></div>
    <div class="node c-join1"><ul class="in"><li>T</li><li>J</li></ul><b>Join</b><ul class="out"><li>R</li></ul></div>
    <div class="node c-area"><ul class="in"><li>G</li></ul><b>Area</b><ul class="out"><li>A</li><li>C</li></ul></div>
    <div class="node c-rni"><ul class="in"><li>S</li><li>pT</li><li>sT</li></ul><b>RNI</b></div>
    <div class="node c-weave"><ul class="in"><li>P</li><li>0</li><li>1</li></ul><b>Weave</b></div>
    <div class="node c-join2"><ul class="in"><li>B</li></ul><b>Join</b><ul class="out"><li>B<i>Y</i></li><li>C</li></ul></div>
    <div class="node c-obj"><ul class="in"><li>G</li><li>Cop</li><li>Rot</li><li>Pri</li><li>OCri</li></ul><b>RNObj</b><ul class="out"><li>G</li></ul></div>
    <div class="node hot c-sbc"><ul class="in"><li>G</li></ul><b>SbC</b><ul class="out"><li>S</li></ul><em></em></div>
    <div class="node hot c-multi"><ul class="in"><li><i>↓</i>G</li><li>I2I</li><li>I2S</li><li>S</li><li>Sec</li><li>Rot</li><li>Cri</li><li>Tol</li><li>TS</li></ul><b>RN Multisheet</b><ul class="out"><li>O</li><li>Id</li><li>U</li><li>S</li><li>Id</li><li>R</li></ul></div>
    <div class="list c-free"><span>Free</span><button aria-label="Next">▼</button><button aria-label="Previous">▲</button></div>
    <div class="list tall c-min"><span>Minimize Area</span><div><button aria-label="Previous">▲</button><button aria-label="Next">▼</button></div></div>
    <div class="list c-minx"><span>MinX</span><button aria-label="Next">▼</button><button aria-label="Previous">▲</button></div>
    <div class="slide c-s0"><label for="r0">Size</label><div><output>0.001</output><input id="r0" type="range" value="50"></div></div>
    <div class="slide c-s1"><label for="r1">Item to Item Distance</label><div><input id="r1" type="range" value="24"><output>0.050</output></div></div>
    <div class="slide c-s2"><label for="r2">Item to Sheet Distance</label><div><input id="r2" type="range" value="24"><output>0.050</output></div></div>
    <div class="slide c-s3"><label for="r3">Text Size</label><div><input id="r3" type="range" value="0"><output>0.001</output></div></div>
    <svg class="compass" viewBox="0 0 44 44"><circle cx="25" cy="22" r="16" fill="#e8e8e8" stroke="#333"/><circle cx="23" cy="19" r="11" fill="#f6f6f6" stroke="none"/><path d="M9 14a18 18 0 0 0 26 23" stroke="#222" stroke-width="2"/><path d="M1 18l11-5 1 10z" fill="#111"/></svg>
  </div>
  <footer class="gstat"><span>...</span><span>0.9.0076</span></footer>
</section>
</body>
</html>
```
FILE: styles.css
```css
*{box-sizing:border-box}
body{margin:0;display:flex;min-height:100vh;overflow:hidden;border-top:2px solid #333;background:#dfe3ea;font:18px/22px "Liberation Sans",Arial,sans-serif;color:#111}
h1,h2,p,ul{margin:0;padding:0;font-weight:400}
button,select,input,textarea{font:inherit;color:inherit;margin:0;padding:0;border:0;background:none}
a{color:inherit;text-decoration:none}
svg{display:block;fill:none;stroke:#222;overflow:hidden}
.defs{position:absolute;width:0;height:0}
.y{color:#fd3}.w{color:#fff}.g{color:#aaa}.k{color:#111}.r{color:#d11}.bb{color:#15c}.b{color:#68f}.o{color:#fb2}.sb{color:#69c}.br{color:#a73}.ly{color:#ff9}.lg{color:#ddd}.dg{color:#555}.pk{color:#f4a}.gr{color:#5e3}
.warm{stroke:#964}.pale{stroke:#bbb}

.rhino{position:relative;flex:1725 1 0;min-width:0;display:flex;flex-direction:column;border-left:3px solid #55575c;overflow:hidden}
.title{display:flex;align-items:center;height:46px;background:#fff;padding-left:9px;color:#959595}
.title h1{font:19px/26px "Open Sans","Noto Sans",sans-serif;flex:1;white-space:nowrap;overflow:hidden}
.logo{width:26px;height:26px;margin-right:5px}
.winctl{display:flex}
.winctl button{width:77px;display:flex;justify-content:center}
.winctl svg{width:17px;height:17px;stroke:#777;stroke-width:1}
.menu{display:flex;gap:12px;height:33px;padding:5px;background:#fff;color:#555;font:19px/24px "Open Sans","Noto Sans",sans-serif}
.history{display:flex;border-top:2px solid #dcdfe4;background:#fff;margin-left:2px;font-size:20px;line-height:23px;padding-left:3px}
.log{flex:1}
.sbar{display:flex;flex-direction:column;align-items:center;width:26px;background:#f1f1f1;padding:12px 0}
.sbar i{width:100%;height:28px;background:#cacaca;margin:auto 0 12px}
.sbar svg{width:12px;height:8px;stroke:#444;stroke-width:2}
.prompt{display:flex;align-items:center;height:29px;border-top:2px solid #d8dade;background:#fff;margin-left:2px;padding-left:3px;font-size:20px;font-weight:700}
.prompt input{flex:1;min-width:0;padding-left:6px}
.spin{display:flex;flex-direction:column;width:24px}
.spin button{height:13px;border:1px solid #bbb;background:#f6f6f6;display:flex;align-items:center;justify-content:center}
.spin svg{width:10px;height:8px;fill:#111;stroke:none}
.tabs{display:flex;height:32px;padding:7px 0 0 4px;border-bottom:1px solid #b4bccd;background:#dfe3ea}
.tabs button{position:relative;flex:none;padding:0 17px;background:#d7dcea;border-top:1px solid #b9c2d4;line-height:24px}
.tabs button::after{content:"";position:absolute;right:0;top:0;bottom:0;width:1px;background:#a9b4ca;transform:skewX(-36deg)}
.tabs .on{background:#fff}
.tabs .on::after{transform:none}
.tabs button:last-of-type{padding-right:4px}
.tabs button:last-of-type::after{content:none}
.tabs .more{flex:1;background:#d7dcea}
.more{font-size:18px;line-height:22px}
.cog{flex:none;width:16px;height:16px;stroke:#777;margin-top:3px}
.row{display:flex;height:38px;background:linear-gradient(#fdfdfe,#e3e6ed)}
.row button{position:relative;flex:none;width:30px;height:32px;display:flex;align-items:center;justify-content:center}
.row svg{width:27px;height:27px}
.d{background:linear-gradient(135deg,transparent 50%,#777 50%) no-repeat right 1px bottom 2px/7px 7px}
.sel{padding:1px 0 0 4px;background:linear-gradient(#fff,#e3e6ed)}
.sel svg{width:23px;height:23px}
.sel button::before,.sel button::after{content:"";position:absolute;width:4px;height:4px}
.sel button::before{right:3px;top:4px;border-top:1px solid #222;border-right:1px solid #222}
.sel button::after{left:3px;bottom:4px;border-left:1px solid #222;border-bottom:1px solid #222}
.sel hr{width:1px;height:30px;margin:0 4px;border:0;background:#c5cad5}
.grpb{display:flex;flex:none;align-items:flex-start;padding:0 0 0 2px;border-right:3px solid #cfd4de;border-left:2px solid #fff}
.grpb .more{line-height:30px;padding-left:5px}
.g1{width:253px}.g2{width:1045px}.g2 .more{padding-left:22px}.g3{width:360px}.g3 .more{padding-left:2px}.g4{flex:1;border-right:0}
.g5{width:288px}.g5 .more{padding-left:20px}.g6{width:585px}.g6 .more{padding-left:22px}.g7{flex:1;border-right:0;padding-left:0}.g7 .more{padding-left:0}
.row .vr{font-weight:700;font-size:16px;z-index:0}
.vr svg{position:absolute;left:2px;top:3px;z-index:-1}

.main{flex:1;display:flex;min-height:0}
.palette{display:grid;grid-template-columns:29px 31px;grid-auto-rows:30px;width:66px;padding:9px 0 0 0;border-right:1px solid #c8ccd4}
.palette button{display:flex;align-items:center;justify-content:center}
.palette svg{width:27px;height:27px}
.viewport{position:relative;flex:1;min-width:0;background:#9ca3ad;overflow:hidden}
.drawing{position:absolute;inset:0;width:100%;height:100%;stroke:none}
.o1,.o2,.thin{fill:none;stroke-linecap:square}
.o1{stroke:#14161a;stroke-width:5px}.o2{stroke:#70777d;stroke-width:2px}
.thin{stroke:#3c4046;stroke-width:1px;vector-effect:non-scaling-stroke;stroke-opacity:.8}
.axis{font:14px "Open Sans",sans-serif;fill:#59616b;stroke:none}
.vlabel{position:absolute;left:0;top:0;display:flex;align-items:center;width:61px;height:32px;padding-left:9px;background:#8ea6c2;color:#0a1530;font:20px/30px "Open Sans",sans-serif}
.vlabel span{margin-left:8px;height:26px;width:12px;border-left:2px solid #0a1530;background:linear-gradient(#0a1530,#0a1530) no-repeat 2px 12px/5px 2px}
.props{position:relative;width:394px;padding:4px 7px 0 0;background:#f6f7fa;border-left:8px solid #e4e7f1}
.ptabs{display:flex;height:30px;align-items:center}
.ptabs button{display:flex;align-items:center;height:28px;padding:0 7px 0 1px;background:#dfe3ee}
.ptabs .on{background:#fff}
.ptabs button svg{width:17px;height:17px;margin-right:1px}
.ptabs .cog{width:14px;height:14px;margin:0 -5px 0 auto}
.snip{position:absolute;left:54px;top:28px;width:260px;text-align:center;background:#f1f4fb;color:#dbe2f1;font:18px/24px "Open Sans",sans-serif}
.props table{position:relative;width:100%;border-collapse:separate;border-spacing:0;table-layout:fixed}
.k1{width:191px}
.props th{padding:0 0 0 4px;text-align:left;font-weight:400;background:#fff;border-left:16px solid #f6f7fa;border-bottom:1px solid #e8ebf0}
.props td{height:26px;padding:0 0 0 3px;background:#fff;border-bottom:1px solid #e8ebf0;border-left:1px solid #eceef2}
.props tr{height:26px;line-height:24px}
.props .sec{height:32px}
.props .sec th{background:none;border-left:0;padding-left:5px}
.props .ro{background:#dfe3e9;color:#777}
.props .bt{padding:0 0 0 1px}
.bt button{display:block;width:100%;height:25px;border:1px solid #b5b5b5;background:#e1e1e1}
.combo{display:flex;height:25px;align-items:center}
.combo select,.zoom select{flex:1;appearance:none}
.combo span:first-child{flex:1}
.chev{position:relative;width:26px;height:25px;background:#f0f1f3;border:1px solid #d5d7dc}
.chev::before{content:"";position:absolute;left:8px;top:5px;width:8px;height:8px;border-right:1px solid #333;border-bottom:1px solid #333;transform:rotate(45deg)}
.dots{width:24px;height:24px;border:1px solid #b5b5b5;background:#e5e5e5}
input[type=checkbox]{appearance:none;position:relative;width:28px;height:28px;border:3px solid #cfcfcf;background:#fff}
input[type=checkbox]:checked::before{content:"";position:absolute;left:7px;top:1px;width:8px;height:15px;border-right:1px solid #aaa;border-bottom:1px solid #aaa;transform:rotate(40deg)}
input.pc[type=checkbox]{display:block;width:20px;height:20px;border:1px solid #333}
input.pc[type=checkbox]:checked::before{left:6px;width:6px;height:12px;border-color:#333}
.vtabs{display:flex;height:34px;padding:2px 0 2px 66px;font:19px/28px "Open Sans",sans-serif}
.vtabs button{padding:0 12px 0 16px;background:#d5daea;border-bottom:1px solid #b0b8cb;border-right:1px solid #b0b8cb;clip-path:polygon(0 0,100% 0,100% 100%,12px 100%)}
.vtabs .on{background:#fff;margin-left:-8px;padding-left:25px}
.vtabs .add{background:#e2e6ee;font-size:15px;width:56px}
.osnap{display:flex;align-items:center;gap:5px;height:48px;padding:0 0 10px 6px;color:#7c7c7c}
.osnap label{display:flex;align-items:center;gap:2px}
.osnap .dis{color:#111}
input.part[type=checkbox]{background:#c9c9c9}
input.full[type=checkbox]{background:#8c8c8c;border:2px solid #4c7fb5}
.status{display:flex;height:22px;border-top:2px solid #b5b9c2;font-size:20px;line-height:22px;white-space:nowrap}
.status span{flex:none;overflow:hidden;border-right:1px solid #b5b9c2;padding-left:2px}
.status .lit{font-weight:700;background:#e6f4fb;padding-left:1px}
.status i{display:inline-block;width:20px;height:20px;background:#000;vertical-align:top;margin-right:2px}
.c1{width:56px}.c2{width:74px}.c3{width:145px}.c4{width:76px}.c5{width:49px}.c6{width:54px}.c7{width:88px}.c8{width:64px}.c9{width:110px}.c10{width:44px}.status .c11{border:0}

.dialog{position:absolute;left:1078px;top:503px;width:391px;height:380px;display:flex;flex-direction:column;background:#f0f0f0;border-top:2px solid #2a6fb0;box-shadow:0 3px 12px rgba(0,0,0,.45)}
.dialog header{position:relative;height:88px;background:#fff;border-bottom:1px solid #999;display:grid;grid-template-columns:1fr 40px;padding:2px 1px 0 3px}
.dialog h2{font:19px/34px "Open Sans",sans-serif}
.dialog .x{justify-self:end;width:33px;height:33px;background:#c9474d;color:#fff;font-weight:700}
.dialog header svg{grid-column:2;width:40px;height:40px;margin:4px 0 0 -3px;fill:none}
.dialog header svg path:first-child{fill:#000}
.body{flex:1;padding:9px 52px 0 54px;font-size:17px}
.body label{display:block;line-height:24px;color:#333}
.rep{display:flex;height:142px;border:1px solid #828790;background:#fff}
.rep textarea{flex:1;resize:none;overflow:hidden;padding:1px 2px;font-size:18px;line-height:21px}
.rep .sbar i{height:39px;margin:9px 0 auto}
.acts{display:flex;gap:5px;margin-top:5px}
.acts button{width:143px;height:30px;line-height:18px;border:1px solid #ccc;border-bottom-color:#999;background:linear-gradient(#fff,#f2f2f2);overflow:hidden;color:#333}
.acts .cpy{width:137px;padding:0 20px;display:flex;align-items:center}
.dialog footer{display:flex;gap:8px;justify-content:flex-end;height:39px;padding:9px 6px 0;border-top:1px solid #999;font-size:17px}
.dialog footer button{width:61px;height:18px;line-height:16px;border:1px solid #bbb;background:#e1e1e1}
.dialog footer .fin{border:2px solid #1a78b5;line-height:14px}
.dialog footer .back{margin-right:-5px}

.gh{flex:775 1 0;min-width:0;display:flex;flex-direction:column;border-left:3px solid #444;background:#f3f3f3;overflow:hidden}
.gmenu{display:flex;gap:24px;height:32px;padding:4px 8px 0 19px;font:17px/24px "Open Sans",sans-serif}
.gmenu span{margin-left:auto;font-size:18px;white-space:nowrap}
.gtabs{display:flex;height:18px;color:#808080;font:17px/18px "Open Sans",sans-serif;border-bottom:1px solid #bbb}
.gtabs button{padding:0 8px;line-height:17px}
.gtabs .on{color:#111;background:#fff;border:1px solid #bbb;border-bottom:0;border-radius:6px 6px 0 0;padding:0 8px 0 6px;line-height:16px}
.ribbon{display:flex;gap:1px;height:64px;padding:3px 0 11px 1px;border-bottom:1px solid #aaa}
.rg{display:flex;gap:8px;border:1px solid #bbb;border-bottom:3px solid #222;border-radius:4px 4px 0 0;background:linear-gradient(#eee,#d2d2d2)}
.rg>div{display:grid;grid-auto-flow:column;grid-template-rows:24px 24px;grid-auto-columns:24px}
.rg svg{width:23px;height:23px}
.rg span{position:relative;z-index:0;width:23px;height:23px;color:#fff;font-size:15px;font-weight:700;line-height:23px;text-align:center}
.rg span svg{position:absolute;left:0;top:0;z-index:-1}
.rg .s{font-size:11px}
.rg .f{font-size:9px;line-height:20px;color:#222}
.rg .cal{background:#222;font-size:13px;line-height:13px}
.cal i{display:block;font-size:8px;line-height:9px;font-style:normal}
.rg .abc{font-size:10px;color:#222;transform:rotate(-25deg)}
.gbar{display:flex;align-items:center;height:38px;background:#f7f7f7;padding-left:2px}
.gbar button{width:25px;height:34px;display:flex;align-items:center;justify-content:center}
.gbar svg{width:21px;height:21px}
.gbar hr{width:1px;height:30px;margin:0 2px 0 3px;border:0;background:#ccc}
.gbar .wide{margin:0 5px}
.gbar .act{border:1px solid #68b0d8;background:#e8f4fb}
.gbar .gap{flex:1}
.zoom{display:flex;width:114px;height:37px;border:1px solid #aaa;background:#fff;font:20px/34px "Open Sans",sans-serif;padding-left:3px}
.zoom .chev{background:none;border:0;height:34px}
.zoom .chev::before{top:9px}
.dd{width:7px;height:3px;background:#222;clip-path:polygon(0 0,100% 0,50% 100%);margin-right:2px}
.dd.end{margin:0}
.canvas{position:relative;flex:1;background:#d4d0c8;overflow:hidden;font:27px/26px "Open Sans","Noto Sans",sans-serif}
.zone{position:absolute;background:#bba6e9;border:1px solid #9484b4}
.z1{left:101px;right:-2px;top:-2px;height:335px}
.z2{left:-2px;right:-2px;top:486px;height:541px}
.grid{position:absolute;inset:0;background:repeating-linear-gradient(90deg,transparent 0 196px,rgba(90,80,110,.22) 196px 197px) 7px 0,repeating-linear-gradient(transparent 0 65px,rgba(90,80,110,.2) 65px 66px) 0 -26px}
.note{position:absolute;width:156px;height:34px;border:2px solid #222;background:linear-gradient(#fff,#eee);font-size:20px;line-height:30px;text-align:center;white-space:nowrap}
.note::after{content:"";position:absolute;left:calc(50% - 6px);bottom:-7px;width:10px;height:10px;background:#eee;border-right:2px solid #222;border-bottom:2px solid #222;transform:rotate(45deg)}
.big{width:248px;height:44px;font-size:28px;line-height:40px}
.n1{left:94px;top:2px}.n2{left:321px;top:434px}.n3{left:398px;top:498px}.n4{left:340px;top:810px}.n5{left:622px;top:671px;width:236px;text-align:left;padding-left:6px}
.wires{position:absolute;left:0;top:0}
.dash{stroke-linecap:round;stroke-dasharray:11 13}
.solid{stroke:#4d4060;stroke-width:4px}
.node{position:absolute;display:flex;border:2px solid #2b2a33;border-radius:4px;background:linear-gradient(#d6d6dd,#abaab5 22px,#8d8c99);color:#14141c}
.node ul{list-style:none;display:flex;flex-direction:column;flex:1;margin-bottom:2px}
.node li{position:relative;flex:1;display:flex;align-items:center;padding:0 9px;white-space:nowrap}
.in li{justify-content:flex-end}
.in li::before,.out li::before{content:"";position:absolute;left:-9px;top:calc(50% - 7px);width:8px;height:15px;border:3px solid #111;border-right:0;border-radius:8px 0 0 8px;background:#fff}
.out li::before{left:auto;right:-9px;border:3px solid #111;border-left:0;border-radius:0 8px 8px 0}
.node b{flex:none;width:32px;margin:2px 0;border:2px solid #111;border-radius:5px;background:linear-gradient(0deg,#8c8c8c,#444 22px,#303030);color:#fff;font-size:33px;line-height:28px;writing-mode:vertical-rl;transform:rotate(180deg);white-space:nowrap;display:flex;align-items:center;justify-content:center}
.hot{background:linear-gradient(#ffcf90,#ff9c2c 22px,#ff8d12);border-color:#6b1a12}
.node li i{width:18px;height:19px;border:1px solid #444;border-radius:3px;background:#ddd;font:700 14px/17px "DejaVu Sans",sans-serif;color:#555;text-align:center;margin-left:auto}
.c-rnrm{left:114px;top:43px;width:117px;height:134px}
.c-move{left:308px;top:80px;width:116px;height:119px}
.c-join1{left:472px;top:119px;width:110px;height:95px}
.c-area{left:136px;top:217px;width:117px;height:103px}
.c-rni{left:681px;top:-9px;width:130px;height:91px}
.c-weave{left:719px;top:130px;width:90px;height:137px}
.c-join2{left:18px;top:520px;width:133px;height:95px}
.c-obj{left:400px;top:540px;width:154px;height:136px}
.c-sbc{left:362px;top:852px;width:112px;height:89px}
.c-multi{left:638px;top:712px;width:230px;height:267px}
.c-rni .in,.c-multi .in,.c-weave .in,.c-obj .in,.c-join2 .in{flex:none}
.c-rni .in{width:73px}.c-multi .in{width:83px}.c-weave .in{width:35px}.c-obj .in{width:75px}.c-join2 .in{width:35px}
.c-join2 .out li{padding-right:3px}
.c-multi .in li:first-child{padding-left:2px}
.node.c-multi .in i{margin:0 auto 0 0;height:20px;width:18px}
.c-sbc em{position:absolute;right:1px;top:-14px;width:14px;height:13px;background:#fc3;border:1px solid #b80;border-radius:2px}
.list,.slide{position:absolute;display:flex;height:27px;border:2px solid #2b2a33;border-radius:4px;background:linear-gradient(#d0d0d8,#b6b6c0 45%,#8f8e9b 50%,#a4a3af);line-height:22px;white-space:nowrap}
.list::after,.slide::after{content:"";position:absolute;right:-8px;top:calc(50% - 7px);width:7px;height:14px;border:3px solid #111;border-left:0;border-radius:0 7px 7px 0;background:#fff}
.list span{flex:1;padding-left:6px;align-self:center}
.list button{width:22px;height:21px;margin:1px 2px 0 0;background:linear-gradient(#666,#1c1c1c);color:#fff;font:12px/20px "DejaVu Sans",sans-serif}
.tall{background:linear-gradient(#d6d6dd,#abaab5 16px,#8d8c99)}
.tall div{display:flex;flex-direction:column;justify-content:space-between;padding:1px 0 2px}
.c-free{left:190px;top:586px;width:132px}
.c-min{left:38px;top:634px;width:296px;height:53px}
.c-minx{left:259px;top:986px;width:238px}
.slide label{padding-left:9px;border-right:2px solid #2b2a33;background:linear-gradient(#c4c3ce,#8f8e9b)}
.slide div{position:relative;flex:1;background:linear-gradient(#fff,#cfcfcf);border-radius:0 3px 3px 0}
.slide output{position:absolute;left:56px;top:-2px}
.slide input{appearance:none;display:block;width:calc(100% - 20px);height:14px;margin:5px 10px 0;background:repeating-linear-gradient(90deg,#bbb 0 1px,transparent 1px 16px) no-repeat 0 0/100% 8px}
.slide input::-webkit-slider-thumb{appearance:none;width:10px;height:12px;border:3px solid #111;border-radius:50%;background:#fff}
.c-s0{left:280px;top:-16px;width:250px}.c-s0 label{width:70px}.c-s0 output{left:6px}
.c-s1{left:41px;top:733px;width:453px}.c-s1 label{width:296px}
.c-s2{left:32px;top:776px;width:467px}.c-s2 label{width:310px}
.c-s3{left:254px;top:1063px;width:324px}.c-s3 label{width:134px}.c-s3 output{left:24px}
.compass{position:absolute;right:2px;bottom:16px;width:44px;height:44px}
.gstat{display:flex;justify-content:space-between;height:27px;padding:0 24px 0 9px;font:17px/28px "Open Sans",sans-serif;color:#555;background:#f0f0f0;overflow:hidden}
```
